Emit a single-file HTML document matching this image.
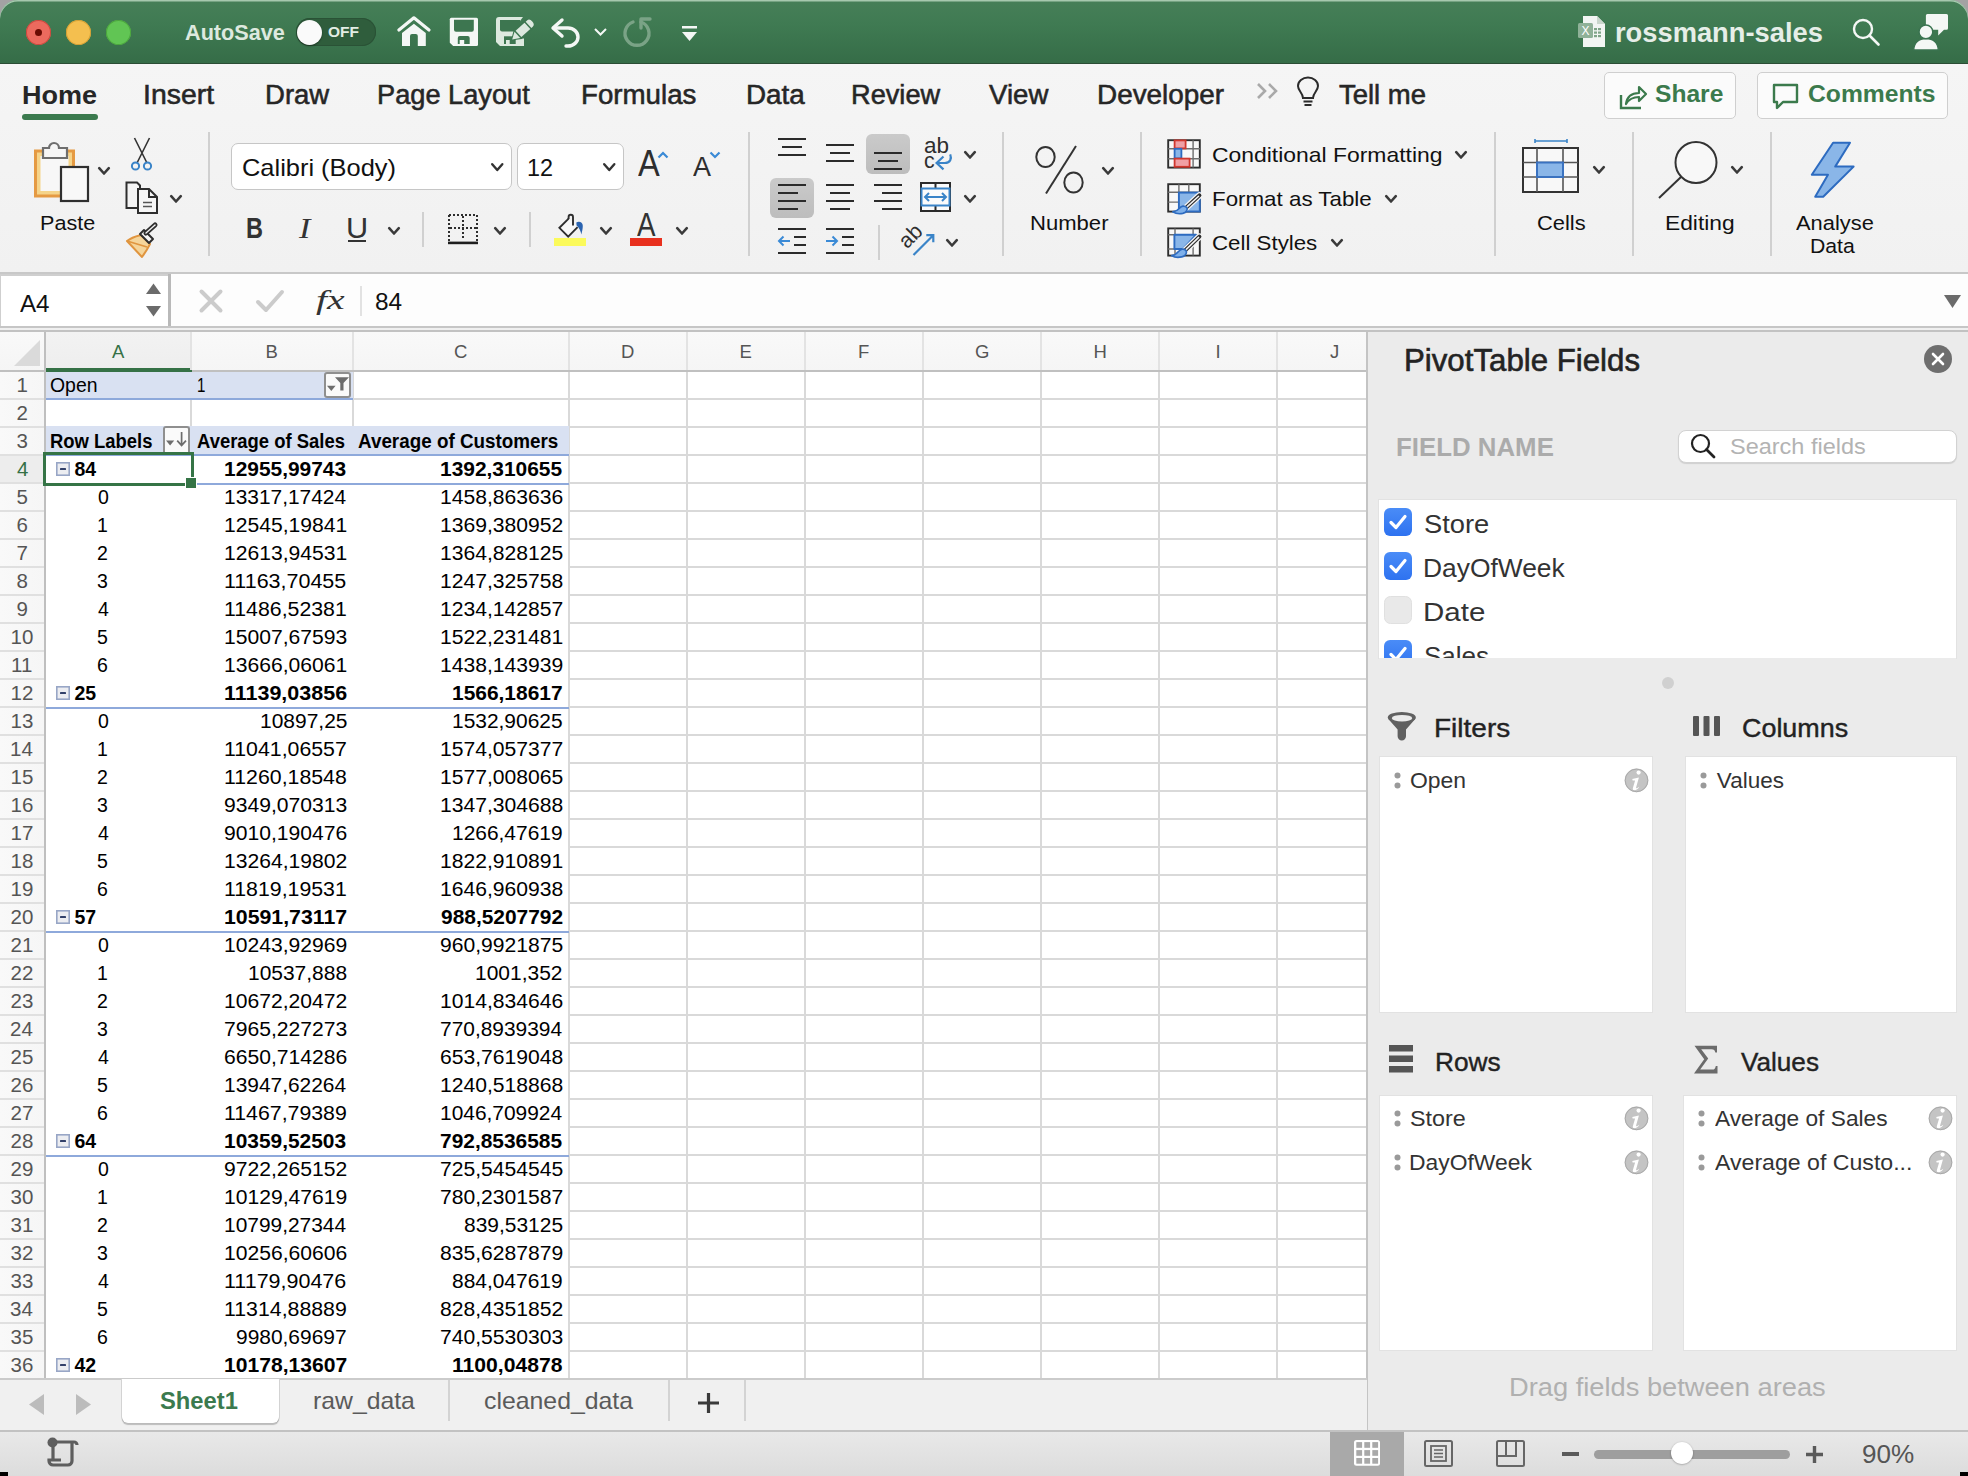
<!DOCTYPE html><html><head><meta charset="utf-8"><style>
html,body{margin:0;padding:0;}
body{width:1968px;height:1476px;overflow:hidden;position:relative;background:#000;font-family:"Liberation Sans",sans-serif;}
.t{position:absolute;white-space:nowrap;transform-origin:0 0;}
.r{position:absolute;}
svg.r{overflow:visible}
</style></head><body>

<div class="r" style="left:0px;top:0px;width:1968px;height:30px;background:#a3a2a3;"></div>
<div class="r" style="left:0px;top:0px;width:1968px;height:1476px;background:#f1f1f1;border-radius:18px 18px 0 0;"></div>
<div class="r" style="left:0px;top:0px;width:1968px;height:64px;background:linear-gradient(#467f58,#3f7a52 40%,#356c47);border-radius:18px 18px 0 0;box-shadow:inset 0 1.5px 0 #a6c8ae;"></div>
<div class="r" style="left:0px;top:62.5px;width:1968px;height:1.5px;background:#2b4d35;"></div>
<div class="r" style="left:25.5px;top:19.5px;width:25px;height:25px;background:#ec6a5e;border-radius:50%;box-shadow:inset 0 0 0 1px #c9483d;"></div>
<div class="r" style="left:65.5px;top:19.5px;width:25px;height:25px;background:#f4bf4f;border-radius:50%;box-shadow:inset 0 0 0 1px #d29f34;"></div>
<div class="r" style="left:105.5px;top:19.5px;width:25px;height:25px;background:#61c554;border-radius:50%;box-shadow:inset 0 0 0 1px #4ba53d;"></div>
<div class="r" style="left:34.5px;top:28.5px;width:7px;height:7px;background:#6b0b03;border-radius:50%;"></div>
<div class="t" style="left:184.60px;top:22px;font-size:22px;line-height:22px;font-weight:700;color:#dde9df;font-family:'Liberation Sans',sans-serif;transform:scaleX(0.9842);">AutoSave</div>
<div class="r" style="left:296px;top:18px;width:80px;height:28px;background:#2f5d3c;border-radius:14px;box-shadow:inset 0 0 0 1px #2a5236;"></div>
<div class="r" style="left:297px;top:19.5px;width:25px;height:25px;background:#fafafa;border-radius:50%;box-shadow:0 1px 2px rgba(0,0,0,.4);"></div>
<div class="t" style="left:328.00px;top:24px;font-size:15.5px;line-height:15.5px;font-weight:700;color:#e3ede5;font-family:'Liberation Sans',sans-serif;">OFF</div>
<svg class="r" style="left:392px;top:10px;" width="90" height="42" viewBox="0 0 90 42"><path d="M6.9 20.1 L21.9 7.8 L37 20.1" fill="none" stroke="#f4f7f5" stroke-width="3.2" stroke-linecap="round" stroke-linejoin="round"/><path d="M10 35.9 V22.9 L21.9 13.7 L33.8 22.9 V35.9 H25.8 V26 a2 2 0 0 0 -2 -2 H20 a2 2 0 0 0 -2 2 V35.9 Z" fill="#f4f7f5"/><path d="M59.3 7.8 H84.5 a1.5 1.5 0 0 1 1.5 1.5 V34.6 a1.5 1.5 0 0 1 -1.5 1.5 H61.2 L57.8 32.7 V9.3 a1.5 1.5 0 0 1 1.5 -1.5 Z" fill="#f4f7f5"/><path d="M62 9.8 H81.8 V19.7 a2 2 0 0 1 -2 2 H64 a2 2 0 0 1 -2 -2 Z" fill="#3d7650"/><path d="M65.8 34 V28 a2 2 0 0 1 2 -2 H75.7 a2 2 0 0 1 2 2 V34 Z" fill="#3d7650"/><rect x="67.7" y="30" width="4.5" height="4" fill="#f4f7f5"/></svg>
<svg class="r" style="left:490px;top:10px;" width="50" height="44" viewBox="0 0 50 44"><path d="M6 10 a3 3 0 0 1 3 -3 H33 L30 11 V21.5 L24 26.3 H27 L30 28.5 H34 V36 H10 L6 32 Z" fill="#dde9df"/><path d="M10 10 H30 V19.5 a2 2 0 0 1 -2 2 H12 a2 2 0 0 1 -2 -2 Z" fill="#3d7650"/><rect x="14" y="26.3" width="11.7" height="7.7" fill="#3d7650"/><rect x="16" y="30" width="3.7" height="4" fill="#dde9df"/><g transform="translate(21.8 29.9) rotate(-42)"><path d="M-1 0 L8 -6 H23 a5 6 0 0 1 0 12 H8 Z" fill="#3d7650"/><path d="M0.5 0 L7.5 -4.3 V4.3 Z" fill="#dde9df"/><rect x="9" y="-4.3" width="12" height="8.6" fill="#dde9df"/><path d="M22.5 -4.3 H24 a3.6 4.3 0 0 1 0 8.6 H22.5 Z" fill="#dde9df"/></g></svg>
<svg class="r" style="left:550px;top:18px;" width="31" height="29" viewBox="0 0 31 29"><path d="M12 2 L3 10 L12 18" fill="none" stroke="#f4f7f5" stroke-width="3.4" stroke-linecap="round" stroke-linejoin="round"/><path d="M4 10 H18 a10 9 0 0 1 0 18 H16" fill="none" stroke="#f4f7f5" stroke-width="3.4" stroke-linecap="round"/></svg>
<svg class="r" style="left:594px;top:28px;" width="13" height="8" viewBox="0 0 13 8"><path d="M1 1 L6.5 6.5 L12 1" fill="none" stroke="#f4f7f5" stroke-width="2"/></svg>
<svg class="r" style="left:623px;top:17px;" width="32" height="32" viewBox="0 0 32 32"><path d="M10 5 a12 12 0 1 0 8 0" fill="none" stroke="#7aa386" stroke-width="3.4" stroke-linecap="round"/><path d="M18 2 V11 M18 2 H27" fill="none" stroke="#7aa386" stroke-width="3.4" stroke-linecap="round"/></svg>
<svg class="r" style="left:682px;top:26px;" width="16" height="16" viewBox="0 0 16 16"><rect x="0" y="0" width="15" height="2.5" fill="#f4f7f5"/><path d="M0 6 H15 L7.5 15 Z" fill="#f4f7f5"/></svg>
<svg class="r" style="left:1578px;top:16px;" width="28" height="31" viewBox="0 0 28 31"><path d="M5 0 H19 L27 8 V31 H5 Z" fill="#f2f5f3"/><path d="M19 0 V8 H27" fill="#c9d6cc"/><rect x="0" y="7" width="15" height="15" rx="1.5" fill="#8fb198"/><text x="3.5" y="19" font-size="12" font-family="Liberation Sans" fill="#fff">X</text><g fill="#7ea487"><rect x="16" y="12" width="3" height="2.2"/><rect x="20" y="12" width="3" height="2.2"/><rect x="16" y="15.5" width="3" height="2.2"/><rect x="20" y="15.5" width="3" height="2.2"/><rect x="16" y="19" width="3" height="2.2"/><rect x="20" y="19" width="3" height="2.2"/></g></svg>
<div class="t" style="left:1615.08px;top:18px;font-size:28.5px;line-height:28.5px;font-weight:700;color:#e6eee8;font-family:'Liberation Sans',sans-serif;transform:scaleX(0.9579);">rossmann-sales</div>
<svg class="r" style="left:1852px;top:18px;" width="29" height="29" viewBox="0 0 29 29"><circle cx="11" cy="11" r="9" fill="none" stroke="#f4f7f5" stroke-width="2.4"/><path d="M17.5 17.5 L26.5 26.5" stroke="#f4f7f5" stroke-width="2.6" stroke-linecap="round"/></svg>
<svg class="r" style="left:1913px;top:13px;" width="37" height="38" viewBox="0 0 37 38"><path d="M12.9 2.4 a1.5 1.5 0 0 1 1.5 -1.5 H33.5 a1.5 1.5 0 0 1 1.5 1.5 V15.3 a1.5 1.5 0 0 1 -1.5 1.5 H31 L25.2 22.6 V16.8 H12.9 Z" fill="#f4f7f5"/><path d="M0.8 37 C0.8 29.5 6 25.6 13 25.6 C20 25.6 25.2 29.5 25.2 37 Z" fill="#f4f7f5" stroke="#3a7350" stroke-width="1.4"/><circle cx="12.9" cy="18.9" r="6.9" fill="#f4f7f5" stroke="#3a7350" stroke-width="1.5"/></svg>
<div class="r" style="left:0px;top:64px;width:1968px;height:209px;background:linear-gradient(#f5f5f5,#f1f1f1);"></div>
<div class="t" style="left:21.96px;top:82px;font-size:26px;line-height:26px;font-weight:700;color:#262626;font-family:'Liberation Sans',sans-serif;transform:scaleX(1.0394);">Home</div>
<div class="t" style="left:142.89px;top:82px;font-size:27px;line-height:27px;font-weight:400;color:#262626;font-family:'Liberation Sans',sans-serif;transform:scaleX(1.0530);-webkit-text-stroke:0.55px #262626;">Insert</div>
<div class="t" style="left:264.76px;top:82px;font-size:27px;line-height:27px;font-weight:400;color:#262626;font-family:'Liberation Sans',sans-serif;transform:scaleX(1.0197);-webkit-text-stroke:0.55px #262626;">Draw</div>
<div class="t" style="left:376.89px;top:82px;font-size:27px;line-height:27px;font-weight:400;color:#262626;font-family:'Liberation Sans',sans-serif;transform:scaleX(1.0073);-webkit-text-stroke:0.55px #262626;">Page Layout</div>
<div class="t" style="left:581.35px;top:82px;font-size:27px;line-height:27px;font-weight:400;color:#262626;font-family:'Liberation Sans',sans-serif;transform:scaleX(1.0255);-webkit-text-stroke:0.55px #262626;">Formulas</div>
<div class="t" style="left:746.24px;top:82px;font-size:27px;line-height:27px;font-weight:400;color:#262626;font-family:'Liberation Sans',sans-serif;transform:scaleX(1.0309);-webkit-text-stroke:0.55px #262626;">Data</div>
<div class="t" style="left:850.69px;top:82px;font-size:27px;line-height:27px;font-weight:400;color:#262626;font-family:'Liberation Sans',sans-serif;transform:scaleX(1.0069);-webkit-text-stroke:0.55px #262626;">Review</div>
<div class="t" style="left:988.70px;top:82px;font-size:27px;line-height:27px;font-weight:400;color:#262626;font-family:'Liberation Sans',sans-serif;transform:scaleX(1.0224);-webkit-text-stroke:0.55px #262626;">View</div>
<div class="t" style="left:1096.73px;top:82px;font-size:27px;line-height:27px;font-weight:400;color:#262626;font-family:'Liberation Sans',sans-serif;transform:scaleX(1.0331);-webkit-text-stroke:0.55px #262626;">Developer</div>
<div class="t" style="left:1338.50px;top:82px;font-size:27px;line-height:27px;font-weight:400;color:#262626;font-family:'Liberation Sans',sans-serif;transform:scaleX(1.0176);-webkit-text-stroke:0.55px #262626;">Tell me</div>
<div class="r" style="left:22px;top:114px;width:76px;height:6px;background:#3b7a4e;border-radius:3px;"></div>
<svg class="r" style="left:1256px;top:82px;" width="25" height="18" viewBox="0 0 25 18"><path d="M2 2 L9 9 L2 16 M13 2 L20 9 L13 16" fill="none" stroke="#a9a9a9" stroke-width="2.6"/></svg>
<svg class="r" style="left:1296px;top:78px;" width="26" height="30" viewBox="0 0 26 30"><path d="M7 20 C7 15 2 13 2 8 a9.5 8 0 0 1 20 0 C22 13 17 15 17 20 Z" fill="none" stroke="#2b2b2b" stroke-width="2"/><path d="M7.5 23.5 H16.5 M8.5 27 H15.5" stroke="#2b2b2b" stroke-width="2"/></svg>
<div class="r" style="left:1603.5px;top:72px;width:132px;height:47px;background:#fbfbfb;border:1px solid #cfcfcf;border-radius:5px;box-sizing:border-box;"></div>
<div class="r" style="left:1756.5px;top:72px;width:191px;height:47px;background:#fbfbfb;border:1px solid #cfcfcf;border-radius:5px;box-sizing:border-box;"></div>
<svg class="r" style="left:1619px;top:83px;" width="28" height="27" viewBox="0 0 28 27"><path d="M2 12 V25 H22" fill="none" stroke="#3b7a4c" stroke-width="2.4"/><path d="M7 21 C8 13 13 10 20 10 V4 L27 11 L20 18 V14 C14 14 10 16 7 21Z" fill="none" stroke="#3b7a4c" stroke-width="2.2" stroke-linejoin="round"/></svg>
<div class="t" style="left:1654.95px;top:83px;font-size:23.5px;line-height:23.5px;font-weight:700;color:#3b7a4c;font-family:'Liberation Sans',sans-serif;transform:scaleX(1.0469);">Share</div>
<svg class="r" style="left:1772px;top:83px;" width="28" height="28" viewBox="0 0 28 28"><path d="M2 2 H25 V19 H11 L5 25 V19 H2 Z" fill="none" stroke="#3b7a4c" stroke-width="2.4" stroke-linejoin="round"/></svg>
<div class="t" style="left:1807.95px;top:83px;font-size:23.5px;line-height:23.5px;font-weight:700;color:#3b7a4c;font-family:'Liberation Sans',sans-serif;transform:scaleX(1.0500);">Comments</div>
<svg class="r" style="left:34px;top:142px;" width="56" height="60" viewBox="0 0 56 60"><rect x="1.5" y="9" width="38" height="45" fill="#f5d48a" stroke="#e59a43" stroke-width="3"/><rect x="6.5" y="14" width="28" height="35" fill="#f7f7f7"/><path d="M9 16 V6 H15 a5 5 0 0 1 10 0 H33 V16 Z" fill="#f6f6f6" stroke="#6e6e6e" stroke-width="2.2"/><rect x="27" y="25" width="27" height="34" fill="#f8f8f8" stroke="#2f2f2f" stroke-width="2.2"/></svg>
<svg class="r" style="left:98px;top:167px;" width="12" height="8" viewBox="0 0 12 8"><path d="M1.2 1.2 L6.0 6.5 L10.8 1.2" fill="none" stroke="#3a3a3a" stroke-width="2.6" stroke-linecap="round" stroke-linejoin="round"/></svg>
<div class="t" style="left:40.25px;top:213px;font-size:20.5px;line-height:20.5px;font-weight:400;color:#111;font-family:'Liberation Sans',sans-serif;transform:scaleX(1.0529);">Paste</div>
<svg class="r" style="left:130px;top:137px;" width="24" height="34" viewBox="0 0 24 34"><path d="M4.5 1 L17 26 M19.5 1 L7 26" stroke="#333" stroke-width="1.6"/><circle cx="5.5" cy="29" r="3.6" fill="none" stroke="#3a84c8" stroke-width="2"/><circle cx="17.5" cy="29" r="3.6" fill="none" stroke="#3a84c8" stroke-width="2"/></svg>
<svg class="r" style="left:125px;top:181px;" width="34" height="34" viewBox="0 0 34 34"><path d="M1.5 1.5 H12 L15 4.5 V27 H1.5 Z" fill="#f4f4f4" stroke="#2e2e2e" stroke-width="2"/><path d="M13 8 H24 L32 16 V32 H13 Z" fill="#f6f6f6" stroke="#2e2e2e" stroke-width="2"/><path d="M24 8 V16 H32" fill="none" stroke="#2e2e2e" stroke-width="2"/><path d="M18 21.5 H27 M18 25.5 H27" stroke="#555" stroke-width="1.6"/></svg>
<svg class="r" style="left:170px;top:195px;" width="12" height="8" viewBox="0 0 12 8"><path d="M1.2 1.2 L6.0 6.5 L10.8 1.2" fill="none" stroke="#3a3a3a" stroke-width="2.6" stroke-linecap="round" stroke-linejoin="round"/></svg>
<svg class="r" style="left:125px;top:223px;" width="35" height="33" viewBox="0 -3 35 33"><path d="M2 15 C7 11 12 10 16 9 L25 18 C23 22 20 27 17 31 Z" fill="#f5d59a" stroke="#e0953f" stroke-width="2" stroke-linejoin="round"/><path d="M2 15 L22 21" stroke="#e0953f" stroke-width="1.6"/><path d="M15 8 L19 4 L28 13 L24 17 Z" fill="#f6f6f6" stroke="#2e2e2e" stroke-width="2" stroke-linejoin="round"/><path d="M21 7 L30 -1" stroke="#2e2e2e" stroke-width="5" stroke-linecap="round"/><path d="M21 7 L30 -1" stroke="#f4f4f4" stroke-width="1.4" stroke-linecap="round"/></svg>
<div class="r" style="left:208px;top:132px;width:2px;height:124px;background:#d0d0d0;"></div>
<div class="r" style="left:230.5px;top:142.5px;width:281px;height:47px;background:#fff;border:1px solid #c6c6c6;border-radius:7px;box-sizing:border-box;"></div>
<div class="t" style="left:241.94px;top:156px;font-size:24px;line-height:24px;font-weight:400;color:#111;font-family:'Liberation Sans',sans-serif;transform:scaleX(1.0594);">Calibri (Body)</div>
<svg class="r" style="left:490.5px;top:163px;" width="12.5" height="8.5" viewBox="0 0 12.5 8.5"><path d="M1.2 1.2 L6.25 7.0 L11.3 1.2" fill="none" stroke="#333" stroke-width="2.4" stroke-linecap="round" stroke-linejoin="round"/></svg>
<div class="r" style="left:516.5px;top:142.5px;width:107px;height:47px;background:#fff;border:1px solid #c6c6c6;border-radius:7px;box-sizing:border-box;"></div>
<div class="t" style="left:526.85px;top:156px;font-size:24px;line-height:24px;font-weight:400;color:#111;font-family:'Liberation Sans',sans-serif;transform:scaleX(0.9750);">12</div>
<svg class="r" style="left:603px;top:163px;" width="12.5" height="8.5" viewBox="0 0 12.5 8.5"><path d="M1.2 1.2 L6.25 7.0 L11.3 1.2" fill="none" stroke="#333" stroke-width="2.4" stroke-linecap="round" stroke-linejoin="round"/></svg>
<div class="t" style="left:638.00px;top:145px;font-size:37px;line-height:37px;font-weight:400;color:#2e2e2e;font-family:'Liberation Sans',sans-serif;transform:scaleX(0.8800);">A</div>
<svg class="r" style="left:657px;top:151px;" width="12" height="8" viewBox="0 0 12 8"><path d="M1.5 6.5 L6 2 L10.5 6.5" fill="none" stroke="#3a8ad6" stroke-width="2.2"/></svg>
<div class="t" style="left:693.00px;top:152px;font-size:28.5px;line-height:28.5px;font-weight:400;color:#2e2e2e;font-family:'Liberation Sans',sans-serif;transform:scaleX(0.9474);">A</div>
<svg class="r" style="left:709px;top:151px;" width="12" height="8" viewBox="0 0 12 8"><path d="M1.5 1.5 L6 6 L10.5 1.5" fill="none" stroke="#3a8ad6" stroke-width="2.2"/></svg>
<div class="t" style="left:245.78px;top:214px;font-size:29px;line-height:29px;font-weight:700;color:#333;font-family:'Liberation Sans',sans-serif;transform:scaleX(0.8111);">B</div>
<div class="t" style="left:299.00px;top:214px;font-size:29px;line-height:29px;font-weight:400;color:#333;font-family:'Liberation Serif',serif;font-style:italic;transform:scaleX(1.1818);">I</div>
<div class="t" style="left:345.88px;top:214px;font-size:29px;line-height:29px;font-weight:400;color:#333;font-family:'Liberation Sans',sans-serif;transform:scaleX(1.0588);">U</div>
<div class="r" style="left:348px;top:240px;width:18px;height:2px;background:#333;"></div>
<svg class="r" style="left:388px;top:227px;" width="12" height="8" viewBox="0 0 12 8"><path d="M1.2 1.2 L6.0 6.5 L10.8 1.2" fill="none" stroke="#3a3a3a" stroke-width="2.6" stroke-linecap="round" stroke-linejoin="round"/></svg>
<div class="r" style="left:422px;top:212px;width:2px;height:35px;background:#d0d0d0;"></div>
<svg class="r" style="left:447px;top:213px;" width="32" height="32" viewBox="0 0 32 32"><g fill="none" stroke="#2e2e2e" stroke-width="2" stroke-dasharray="2 2"><path d="M2 2 H30 V28 M2 2 V28"/><path d="M16 3 V27 M3 15 H29"/></g><rect x="1" y="28.6" width="30" height="2.6" fill="#1e1e1e"/></svg>
<svg class="r" style="left:494px;top:227px;" width="12" height="8" viewBox="0 0 12 8"><path d="M1.2 1.2 L6.0 6.5 L10.8 1.2" fill="none" stroke="#3a3a3a" stroke-width="2.6" stroke-linecap="round" stroke-linejoin="round"/></svg>
<div class="r" style="left:529px;top:212px;width:2px;height:35px;background:#d0d0d0;"></div>
<svg class="r" style="left:557px;top:213px;" width="28" height="26" viewBox="0 0 28 26"><path d="M11.6 5.6 L2.4 14.8 L11.2 23.6 L20.6 14.2" fill="#f8f8f8" stroke="#2e2e2e" stroke-width="1.9" stroke-linejoin="miter"/><path d="M11.6 5.6 L20.6 14.2" stroke="none"/><path d="M16 12.6 V4 a2.2 2.2 0 0 0 -4.4 0 V6" fill="none" stroke="#2e2e2e" stroke-width="1.9"/><path d="M19.3 9.6 C21.5 7.6 25.8 8.8 25.8 12.8 C25.8 15.8 25 18.6 24.4 21.6 C23.6 18 22.6 15.2 19.6 12.6 Z" fill="#2a63b0"/></svg>
<div class="r" style="left:554px;top:237.8px;width:32px;height:8.2px;background:#fbfa5b;"></div>
<svg class="r" style="left:600px;top:227px;" width="12" height="8" viewBox="0 0 12 8"><path d="M1.2 1.2 L6.0 6.5 L10.8 1.2" fill="none" stroke="#3a3a3a" stroke-width="2.6" stroke-linecap="round" stroke-linejoin="round"/></svg>
<div class="t" style="left:637.00px;top:208px;font-size:33px;line-height:33px;font-weight:400;color:#333;font-family:'Liberation Sans',sans-serif;transform:scaleX(0.8409);">A</div>
<div class="r" style="left:630px;top:238px;width:32px;height:8px;background:#e8301e;"></div>
<svg class="r" style="left:676px;top:227px;" width="12" height="8" viewBox="0 0 12 8"><path d="M1.2 1.2 L6.0 6.5 L10.8 1.2" fill="none" stroke="#3a3a3a" stroke-width="2.6" stroke-linecap="round" stroke-linejoin="round"/></svg>
<div class="r" style="left:748px;top:132px;width:2px;height:124px;background:#d0d0d0;"></div>
<div class="r" style="left:866px;top:134px;width:44px;height:40px;background:linear-gradient(#cacaca,#bdbdbd);border-radius:6px;"></div>
<div class="r" style="left:770px;top:178px;width:44px;height:40px;background:linear-gradient(#cacaca,#bdbdbd);border-radius:6px;"></div>
<div class="r" style="left:778px;top:138px;width:28px;height:2px;background:#2b2b2b;"></div>
<div class="r" style="left:782px;top:146px;width:20px;height:2px;background:#2b2b2b;"></div>
<div class="r" style="left:778px;top:154px;width:28px;height:2px;background:#2b2b2b;"></div>
<div class="r" style="left:826px;top:144px;width:28px;height:2px;background:#2b2b2b;"></div>
<div class="r" style="left:830px;top:152px;width:20px;height:2px;background:#2b2b2b;"></div>
<div class="r" style="left:826px;top:160px;width:28px;height:2px;background:#2b2b2b;"></div>
<div class="r" style="left:874px;top:152px;width:28px;height:2px;background:#2b2b2b;"></div>
<div class="r" style="left:878px;top:160px;width:20px;height:2px;background:#2b2b2b;"></div>
<div class="r" style="left:874px;top:168px;width:28px;height:2px;background:#2b2b2b;"></div>
<div class="r" style="left:778px;top:184px;width:28px;height:2px;background:#2b2b2b;"></div>
<div class="r" style="left:778px;top:192px;width:20px;height:2px;background:#2b2b2b;"></div>
<div class="r" style="left:778px;top:200px;width:28px;height:2px;background:#2b2b2b;"></div>
<div class="r" style="left:778px;top:208px;width:20px;height:2px;background:#2b2b2b;"></div>
<div class="r" style="left:826px;top:184px;width:28px;height:2px;background:#2b2b2b;"></div>
<div class="r" style="left:830px;top:192px;width:20px;height:2px;background:#2b2b2b;"></div>
<div class="r" style="left:826px;top:200px;width:28px;height:2px;background:#2b2b2b;"></div>
<div class="r" style="left:830px;top:208px;width:20px;height:2px;background:#2b2b2b;"></div>
<div class="r" style="left:874px;top:184px;width:28px;height:2px;background:#2b2b2b;"></div>
<div class="r" style="left:882px;top:192px;width:20px;height:2px;background:#2b2b2b;"></div>
<div class="r" style="left:874px;top:200px;width:28px;height:2px;background:#2b2b2b;"></div>
<div class="r" style="left:882px;top:208px;width:20px;height:2px;background:#2b2b2b;"></div>
<div class="t" style="left:924.05px;top:136px;font-size:21.5px;line-height:21.5px;font-weight:400;color:#2e2e2e;font-family:'Liberation Sans',sans-serif;transform:scaleX(1.0455);">ab</div>
<div class="t" style="left:924.01px;top:151px;font-size:21.5px;line-height:21.5px;font-weight:400;color:#2e2e2e;font-family:'Liberation Sans',sans-serif;transform:scaleX(0.9889);">c</div>
<svg class="r" style="left:934px;top:152px;" width="20" height="20" viewBox="0 0 20 20"><path d="M16.2 2.4 C17.8 6.5 16.5 11 10.8 11 H3" fill="none" stroke="#3a84c8" stroke-width="2.2"/><path d="M9.5 4.5 L2.6 11 L9.5 17.4" fill="none" stroke="#3a84c8" stroke-width="2.2"/></svg>
<svg class="r" style="left:964px;top:151px;" width="12" height="8" viewBox="0 0 12 8"><path d="M1.2 1.2 L6.0 6.5 L10.8 1.2" fill="none" stroke="#3a3a3a" stroke-width="2.6" stroke-linecap="round" stroke-linejoin="round"/></svg>
<svg class="r" style="left:920px;top:182px;" width="31" height="30" viewBox="0 0 31 30"><rect x="1" y="1" width="29" height="28" fill="#fbfbfb" stroke="#2b2b2b" stroke-width="2"/><path d="M15.5 1 V6 M15.5 24 V29" stroke="#2b2b2b" stroke-width="2"/><rect x="1.5" y="6.5" width="28" height="17" fill="#fbfbfb" stroke="#3a84c8" stroke-width="2"/><path d="M5 15 H26 M9 11 L5 15 L9 19 M22 11 L26 15 L22 19" fill="none" stroke="#3a84c8" stroke-width="2"/></svg>
<svg class="r" style="left:964px;top:195px;" width="12" height="8" viewBox="0 0 12 8"><path d="M1.2 1.2 L6.0 6.5 L10.8 1.2" fill="none" stroke="#3a3a3a" stroke-width="2.6" stroke-linecap="round" stroke-linejoin="round"/></svg>
<div class="r" style="left:778px;top:228px;width:28px;height:2px;background:#2b2b2b;"></div>
<div class="r" style="left:794px;top:236px;width:12px;height:2px;background:#2b2b2b;"></div>
<div class="r" style="left:794px;top:244px;width:12px;height:2px;background:#2b2b2b;"></div>
<div class="r" style="left:778px;top:252px;width:28px;height:2px;background:#2b2b2b;"></div>
<div class="r" style="left:826px;top:228px;width:28px;height:2px;background:#2b2b2b;"></div>
<div class="r" style="left:842px;top:236px;width:12px;height:2px;background:#2b2b2b;"></div>
<div class="r" style="left:842px;top:244px;width:12px;height:2px;background:#2b2b2b;"></div>
<div class="r" style="left:826px;top:252px;width:28px;height:2px;background:#2b2b2b;"></div>
<svg class="r" style="left:777px;top:235px;" width="14" height="12" viewBox="0 0 14 12"><path d="M13 6 H2 M6.5 1.5 L2 6 L6.5 10.5" fill="none" stroke="#3a8ad6" stroke-width="2"/></svg>
<svg class="r" style="left:825px;top:235px;" width="14" height="12" viewBox="0 0 14 12"><path d="M1 6 H12 M7.5 1.5 L12 6 L7.5 10.5" fill="none" stroke="#3a8ad6" stroke-width="2"/></svg>
<div class="r" style="left:878px;top:225px;width:2px;height:35px;background:#d0d0d0;"></div>
<svg class="r" style="left:895px;top:220px;" width="50" height="42" viewBox="0 0 50 42"><text x="0" y="0" font-family="Liberation Sans" font-size="21.5" fill="#2e2e2e" transform="translate(12 29.5) rotate(-45)">ab</text><path d="M18.5 35 L37.5 16 M31.3 15.2 H38.3 V22.2" fill="none" stroke="#3a84c8" stroke-width="2.2"/></svg>
<svg class="r" style="left:946px;top:239px;" width="12" height="8" viewBox="0 0 12 8"><path d="M1.2 1.2 L6.0 6.5 L10.8 1.2" fill="none" stroke="#3a3a3a" stroke-width="2.6" stroke-linecap="round" stroke-linejoin="round"/></svg>
<div class="r" style="left:1002px;top:132px;width:2px;height:124px;background:#d0d0d0;"></div>
<svg class="r" style="left:1033px;top:144px;" width="54" height="52" viewBox="0 0 54 52"><ellipse cx="12.5" cy="13" rx="9.2" ry="10" fill="none" stroke="#333" stroke-width="2"/><ellipse cx="40.5" cy="38.5" rx="9.2" ry="10" fill="none" stroke="#333" stroke-width="2"/><path d="M13 49.5 L43 2" stroke="#333" stroke-width="2"/></svg>
<svg class="r" style="left:1102px;top:167px;" width="12" height="8" viewBox="0 0 12 8"><path d="M1.2 1.2 L6.0 6.5 L10.8 1.2" fill="none" stroke="#3a3a3a" stroke-width="2.6" stroke-linecap="round" stroke-linejoin="round"/></svg>
<div class="t" style="left:1030.42px;top:213px;font-size:20.5px;line-height:20.5px;font-weight:400;color:#111;font-family:'Liberation Sans',sans-serif;transform:scaleX(1.0764);">Number</div>
<div class="r" style="left:1140px;top:132px;width:2px;height:124px;background:#d0d0d0;"></div>
<svg class="r" style="left:1167px;top:139px;" width="34" height="31" viewBox="0 0 34 31"><rect x="1.2" y="1.2" width="31.6" height="27.4" fill="#f8f8f8" stroke="#2e2e2e" stroke-width="1.9"/><path d="M1.2 9.8 H33 M1.2 19.7 H33 M26.1 1.2 V28.6" stroke="#6e6e6e" stroke-width="1.4"/><rect x="7.6" y="1.4" width="11" height="8" fill="#f0a0a5" stroke="#d0372e" stroke-width="1.8"/><rect x="7.6" y="9.8" width="6.8" height="9.6" fill="#8ab6e8" stroke="#2d6bc0" stroke-width="1.8"/><rect x="7.6" y="19.6" width="15" height="8.2" fill="#f0a0a5" stroke="#d0372e" stroke-width="1.8"/></svg>
<div class="t" style="left:1211.91px;top:144px;font-size:21px;line-height:21px;font-weight:400;color:#111;font-family:'Liberation Sans',sans-serif;transform:scaleX(1.0909);">Conditional Formatting</div>
<svg class="r" style="left:1455px;top:151px;" width="12" height="8" viewBox="0 0 12 8"><path d="M1.2 1.2 L6.0 6.5 L10.8 1.2" fill="none" stroke="#3a3a3a" stroke-width="2.6" stroke-linecap="round" stroke-linejoin="round"/></svg>
<svg class="r" style="left:1167px;top:183px;" width="36" height="32" viewBox="0 0 36 32"><rect x="1.2" y="1.2" width="31.6" height="27.4" fill="#f8f8f8" stroke="#2e2e2e" stroke-width="1.9"/><path d="M1.2 9.2 H33 M1.2 19.1 H12 M11.9 1.2 V28.6 M21.8 1.2 V9.2" stroke="#6e6e6e" stroke-width="1.4"/><rect x="11.9" y="9.6" width="20.9" height="18.9" fill="#8ab6e8" stroke="#2d6bc0" stroke-width="1.9"/><path d="M32.4 12.4 L19.2 24.6" stroke="#f4f4f4" stroke-width="6.5" stroke-linecap="round"/><path d="M32.4 12.4 L19.2 24.6" stroke="#2e2e2e" stroke-width="4" stroke-linecap="round"/><path d="M31.6 13.2 L20 23.9" stroke="#f4f4f4" stroke-width="1.5" stroke-linecap="round"/><path d="M5.8 28.8 C9 28.5 10.5 27.5 12.5 25.2 C14.5 22.8 17.5 22.3 19.6 24.4 C21.2 26.2 19.5 29.6 15.8 30.4 C12.5 31 8.5 30.6 5.8 28.8 Z" fill="#7eb0ea" stroke="#2d6bc0" stroke-width="1.6" stroke-linejoin="round"/></svg>
<div class="t" style="left:1211.94px;top:188px;font-size:21px;line-height:21px;font-weight:400;color:#111;font-family:'Liberation Sans',sans-serif;transform:scaleX(1.0638);">Format as Table</div>
<svg class="r" style="left:1385px;top:195px;" width="12" height="8" viewBox="0 0 12 8"><path d="M1.2 1.2 L6.0 6.5 L10.8 1.2" fill="none" stroke="#3a3a3a" stroke-width="2.6" stroke-linecap="round" stroke-linejoin="round"/></svg>
<svg class="r" style="left:1167px;top:227px;" width="36" height="32" viewBox="0 0 36 32"><rect x="1.2" y="1.4" width="31.6" height="27.2" fill="#f8f8f8" stroke="#2e2e2e" stroke-width="1.9"/><path d="M1.2 7.8 H33 M1.2 22 H8 M8 1.4 V28.6 M26.1 1.4 V28.6" stroke="#6e6e6e" stroke-width="1.4"/><path d="M7.4 22 V7.8 H29 L16 22 Z" fill="#8ab6e8" stroke="#2d6bc0" stroke-width="1.9" stroke-linejoin="round"/><path d="M32.4 9.6 L18.2 23.4" stroke="#f4f4f4" stroke-width="6.5" stroke-linecap="round"/><path d="M32.4 9.6 L18.2 23.4" stroke="#2e2e2e" stroke-width="4" stroke-linecap="round"/><path d="M31.6 10.4 L19 22.6" stroke="#f4f4f4" stroke-width="1.5" stroke-linecap="round"/><path d="M4.6 28.6 C7.8 28.3 9.5 27.2 11.5 24.6 C13.5 22 16.6 21.3 18.8 23.4 C20.4 25.4 18.6 29.1 14.8 29.9 C11.5 30.6 7.4 30.4 4.6 28.6 Z" fill="#7eb0ea" stroke="#2d6bc0" stroke-width="1.6" stroke-linejoin="round"/></svg>
<div class="t" style="left:1211.94px;top:232px;font-size:21px;line-height:21px;font-weight:400;color:#111;font-family:'Liberation Sans',sans-serif;transform:scaleX(1.0612);">Cell Styles</div>
<svg class="r" style="left:1331px;top:239px;" width="12" height="8" viewBox="0 0 12 8"><path d="M1.2 1.2 L6.0 6.5 L10.8 1.2" fill="none" stroke="#3a3a3a" stroke-width="2.6" stroke-linecap="round" stroke-linejoin="round"/></svg>
<div class="r" style="left:1494px;top:132px;width:2px;height:124px;background:#d0d0d0;"></div>
<svg class="r" style="left:1522px;top:137px;" width="58" height="56" viewBox="0 0 58 56"><path d="M13 2 V6 M13 4 H45 M45 2 V6" stroke="#3a84c8" stroke-width="1.6"/><rect x="1" y="11" width="55" height="44" fill="#f8f8f8" stroke="#333" stroke-width="2"/><path d="M1 25.5 H56 M1 40 H56 M15 11 V55 M41 11 V55" stroke="#555" stroke-width="1.6"/><rect x="15" y="25.5" width="26" height="14.5" fill="#8ab6e8" stroke="#3a72c0" stroke-width="2"/></svg>
<svg class="r" style="left:1593px;top:166px;" width="12" height="8" viewBox="0 0 12 8"><path d="M1.2 1.2 L6.0 6.5 L10.8 1.2" fill="none" stroke="#3a3a3a" stroke-width="2.6" stroke-linecap="round" stroke-linejoin="round"/></svg>
<div class="t" style="left:1536.93px;top:213px;font-size:20.5px;line-height:20.5px;font-weight:400;color:#111;font-family:'Liberation Sans',sans-serif;transform:scaleX(1.0682);">Cells</div>
<div class="r" style="left:1632px;top:132px;width:2px;height:124px;background:#d0d0d0;"></div>
<svg class="r" style="left:1657px;top:141px;" width="62" height="60" viewBox="0 0 62 60"><circle cx="39" cy="21.5" r="20.5" fill="#f8f8f8" stroke="#333" stroke-width="2"/><path d="M24 36 L2 57" stroke="#333" stroke-width="2"/></svg>
<svg class="r" style="left:1731px;top:166px;" width="12" height="8" viewBox="0 0 12 8"><path d="M1.2 1.2 L6.0 6.5 L10.8 1.2" fill="none" stroke="#3a3a3a" stroke-width="2.6" stroke-linecap="round" stroke-linejoin="round"/></svg>
<div class="t" style="left:1664.59px;top:213px;font-size:20.5px;line-height:20.5px;font-weight:400;color:#111;font-family:'Liberation Sans',sans-serif;transform:scaleX(1.1115);">Editing</div>
<div class="r" style="left:1770px;top:132px;width:2px;height:124px;background:#d0d0d0;"></div>
<svg class="r" style="left:1810px;top:141px;" width="46" height="58" viewBox="0 0 46 58"><path d="M23.1 1.8 H40 L25.2 25.6 H43.6 L13.2 55.8 H5.2 L18 33.8 H1.8 Z" fill="#8ab6e8" stroke="#2d6bc0" stroke-width="2" stroke-linejoin="round"/></svg>
<div class="t" style="left:1795.70px;top:213px;font-size:20.5px;line-height:20.5px;font-weight:400;color:#111;font-family:'Liberation Sans',sans-serif;transform:scaleX(1.0667);">Analyse</div>
<div class="t" style="left:1810.47px;top:236px;font-size:20.5px;line-height:20.5px;font-weight:400;color:#111;font-family:'Liberation Sans',sans-serif;transform:scaleX(1.0349);">Data</div>
<div class="r" style="left:0px;top:272px;width:1968px;height:2px;background:#c8c8c8;"></div>
<div class="r" style="left:0px;top:274px;width:1968px;height:58px;background:#fdfdfd;"></div>
<div class="r" style="left:0px;top:274px;width:170px;height:52px;background:#fff;box-shadow:inset 1px 2px 0 #cfcfcf;"></div>
<div class="r" style="left:168px;top:274px;width:3px;height:52px;background:#b9b9b9;"></div>
<div class="r" style="left:0px;top:326px;width:1968px;height:2px;background:#c6c6c6;"></div>
<div class="r" style="left:0px;top:328px;width:1968px;height:2px;background:#f0f0f0;"></div>
<div class="r" style="left:0px;top:330px;width:1968px;height:2px;background:#c2c2c2;"></div>
<div class="t" style="left:20.30px;top:292px;font-size:24px;line-height:24px;font-weight:400;color:#111;font-family:'Liberation Sans',sans-serif;transform:scaleX(1.0069);">A4</div>
<svg class="r" style="left:146px;top:283px;" width="15" height="11" viewBox="0 0 15 11"><path d="M0 11 L7.5 0.5 L15 11 Z" fill="#6b6b6b"/></svg>
<svg class="r" style="left:146px;top:306px;" width="15" height="11" viewBox="0 0 15 11"><path d="M0 0 L7.5 10.5 L15 0 Z" fill="#6b6b6b"/></svg>
<svg class="r" style="left:199px;top:289px;" width="24" height="24" viewBox="0 0 24 24"><path d="M2.5 2.5 L21.5 21.5 M21.5 2.5 L2.5 21.5" stroke="#cbcbcb" stroke-width="4" stroke-linecap="round"/></svg>
<svg class="r" style="left:255px;top:289px;" width="30" height="24" viewBox="0 0 30 24"><path d="M3 13 L11 21 L27 3" fill="none" stroke="#cbcbcb" stroke-width="4" stroke-linecap="round" stroke-linejoin="round"/></svg>
<div class="t" style="left:316.00px;top:286px;font-size:28px;line-height:28px;font-weight:400;color:#333;font-family:'Liberation Serif',serif;font-style:italic;transform:scaleX(1.4200);">fx</div>
<div class="r" style="left:360px;top:286px;width:1.5px;height:30px;background:#e2e2e2;"></div>
<div class="t" style="left:374.58px;top:290px;font-size:24px;line-height:24px;font-weight:400;color:#111;font-family:'Liberation Sans',sans-serif;transform:scaleX(1.0160);">84</div>
<svg class="r" style="left:1944px;top:295px;" width="17" height="13" viewBox="0 0 17 13"><path d="M0 0 H17 L8.5 13 Z" fill="#6b6b6b"/></svg>
<div class="r" style="left:0px;top:332px;width:1367px;height:39px;background:linear-gradient(#f9f9f9,#f5f5f5);"></div>
<div class="r" style="left:46px;top:332px;width:145px;height:38px;background:linear-gradient(#f2f2f2,#eeeeee);"></div>
<div class="r" style="left:0px;top:370px;width:1367px;height:2px;background:#c0c0c0;"></div>
<div class="r" style="left:46px;top:368px;width:146px;height:4px;background:#357146;"></div>
<svg class="r" style="left:14px;top:340px;" width="26" height="26" viewBox="0 0 26 26"><path d="M26 0 V26 H0 Z" fill="#dadada"/></svg>
<div class="r" style="left:190px;top:332px;width:1.5px;height:38px;background:#e3e3e3;"></div>
<div class="r" style="left:352px;top:332px;width:1.5px;height:38px;background:#e3e3e3;"></div>
<div class="r" style="left:568px;top:332px;width:1.5px;height:38px;background:#e3e3e3;"></div>
<div class="r" style="left:686px;top:332px;width:1.5px;height:38px;background:#e3e3e3;"></div>
<div class="r" style="left:804px;top:332px;width:1.5px;height:38px;background:#e3e3e3;"></div>
<div class="r" style="left:922px;top:332px;width:1.5px;height:38px;background:#e3e3e3;"></div>
<div class="r" style="left:1040px;top:332px;width:1.5px;height:38px;background:#e3e3e3;"></div>
<div class="r" style="left:1158px;top:332px;width:1.5px;height:38px;background:#e3e3e3;"></div>
<div class="r" style="left:1276px;top:332px;width:1.5px;height:38px;background:#e3e3e3;"></div>
<div class="t" style="left:112.00px;top:343px;font-size:18.5px;line-height:18.5px;font-weight:400;color:#357146;font-family:'Liberation Sans',sans-serif;">A</div>
<div class="t" style="left:265.50px;top:343px;font-size:18.5px;line-height:18.5px;font-weight:400;color:#555;font-family:'Liberation Sans',sans-serif;">B</div>
<div class="t" style="left:454.00px;top:343px;font-size:18.5px;line-height:18.5px;font-weight:400;color:#555;font-family:'Liberation Sans',sans-serif;">C</div>
<div class="t" style="left:621.00px;top:343px;font-size:18.5px;line-height:18.5px;font-weight:400;color:#555;font-family:'Liberation Sans',sans-serif;">D</div>
<div class="t" style="left:739.50px;top:343px;font-size:18.5px;line-height:18.5px;font-weight:400;color:#555;font-family:'Liberation Sans',sans-serif;">E</div>
<div class="t" style="left:858.00px;top:343px;font-size:18.5px;line-height:18.5px;font-weight:400;color:#555;font-family:'Liberation Sans',sans-serif;">F</div>
<div class="t" style="left:975.00px;top:343px;font-size:18.5px;line-height:18.5px;font-weight:400;color:#555;font-family:'Liberation Sans',sans-serif;">G</div>
<div class="t" style="left:1093.50px;top:343px;font-size:18.5px;line-height:18.5px;font-weight:400;color:#555;font-family:'Liberation Sans',sans-serif;">H</div>
<div class="t" style="left:1215.50px;top:343px;font-size:18.5px;line-height:18.5px;font-weight:400;color:#555;font-family:'Liberation Sans',sans-serif;">I</div>
<div class="t" style="left:1330.00px;top:343px;font-size:18.5px;line-height:18.5px;font-weight:400;color:#555;font-family:'Liberation Sans',sans-serif;">J</div>
<div class="r" style="left:0px;top:372px;width:1367px;height:1006px;background:#fff;"></div>
<div class="r" style="left:0px;top:372px;width:44px;height:1006px;background:linear-gradient(90deg,#f9f9f9,#f6f6f6);"></div>
<div class="r" style="left:44px;top:332px;width:2px;height:1046px;background:#bfbfbf;"></div>
<div class="r" style="left:0px;top:456px;width:44px;height:26px;background:#ededed;"></div>
<div class="r" style="left:0px;top:398px;width:44px;height:2px;background:#e0e0e0;"></div>
<div class="r" style="left:46px;top:398px;width:1321px;height:2px;background:#d9d9d9;"></div>
<div class="r" style="left:0px;top:426px;width:44px;height:2px;background:#e0e0e0;"></div>
<div class="r" style="left:46px;top:426px;width:1321px;height:2px;background:#d9d9d9;"></div>
<div class="r" style="left:0px;top:454px;width:44px;height:2px;background:#e0e0e0;"></div>
<div class="r" style="left:46px;top:454px;width:1321px;height:2px;background:#d9d9d9;"></div>
<div class="r" style="left:0px;top:482px;width:44px;height:2px;background:#e0e0e0;"></div>
<div class="r" style="left:46px;top:482px;width:1321px;height:2px;background:#d9d9d9;"></div>
<div class="r" style="left:0px;top:510px;width:44px;height:2px;background:#e0e0e0;"></div>
<div class="r" style="left:46px;top:510px;width:1321px;height:2px;background:#d9d9d9;"></div>
<div class="r" style="left:0px;top:538px;width:44px;height:2px;background:#e0e0e0;"></div>
<div class="r" style="left:46px;top:538px;width:1321px;height:2px;background:#d9d9d9;"></div>
<div class="r" style="left:0px;top:566px;width:44px;height:2px;background:#e0e0e0;"></div>
<div class="r" style="left:46px;top:566px;width:1321px;height:2px;background:#d9d9d9;"></div>
<div class="r" style="left:0px;top:594px;width:44px;height:2px;background:#e0e0e0;"></div>
<div class="r" style="left:46px;top:594px;width:1321px;height:2px;background:#d9d9d9;"></div>
<div class="r" style="left:0px;top:622px;width:44px;height:2px;background:#e0e0e0;"></div>
<div class="r" style="left:46px;top:622px;width:1321px;height:2px;background:#d9d9d9;"></div>
<div class="r" style="left:0px;top:650px;width:44px;height:2px;background:#e0e0e0;"></div>
<div class="r" style="left:46px;top:650px;width:1321px;height:2px;background:#d9d9d9;"></div>
<div class="r" style="left:0px;top:678px;width:44px;height:2px;background:#e0e0e0;"></div>
<div class="r" style="left:46px;top:678px;width:1321px;height:2px;background:#d9d9d9;"></div>
<div class="r" style="left:0px;top:706px;width:44px;height:2px;background:#e0e0e0;"></div>
<div class="r" style="left:46px;top:706px;width:1321px;height:2px;background:#d9d9d9;"></div>
<div class="r" style="left:0px;top:734px;width:44px;height:2px;background:#e0e0e0;"></div>
<div class="r" style="left:46px;top:734px;width:1321px;height:2px;background:#d9d9d9;"></div>
<div class="r" style="left:0px;top:762px;width:44px;height:2px;background:#e0e0e0;"></div>
<div class="r" style="left:46px;top:762px;width:1321px;height:2px;background:#d9d9d9;"></div>
<div class="r" style="left:0px;top:790px;width:44px;height:2px;background:#e0e0e0;"></div>
<div class="r" style="left:46px;top:790px;width:1321px;height:2px;background:#d9d9d9;"></div>
<div class="r" style="left:0px;top:818px;width:44px;height:2px;background:#e0e0e0;"></div>
<div class="r" style="left:46px;top:818px;width:1321px;height:2px;background:#d9d9d9;"></div>
<div class="r" style="left:0px;top:846px;width:44px;height:2px;background:#e0e0e0;"></div>
<div class="r" style="left:46px;top:846px;width:1321px;height:2px;background:#d9d9d9;"></div>
<div class="r" style="left:0px;top:874px;width:44px;height:2px;background:#e0e0e0;"></div>
<div class="r" style="left:46px;top:874px;width:1321px;height:2px;background:#d9d9d9;"></div>
<div class="r" style="left:0px;top:902px;width:44px;height:2px;background:#e0e0e0;"></div>
<div class="r" style="left:46px;top:902px;width:1321px;height:2px;background:#d9d9d9;"></div>
<div class="r" style="left:0px;top:930px;width:44px;height:2px;background:#e0e0e0;"></div>
<div class="r" style="left:46px;top:930px;width:1321px;height:2px;background:#d9d9d9;"></div>
<div class="r" style="left:0px;top:958px;width:44px;height:2px;background:#e0e0e0;"></div>
<div class="r" style="left:46px;top:958px;width:1321px;height:2px;background:#d9d9d9;"></div>
<div class="r" style="left:0px;top:986px;width:44px;height:2px;background:#e0e0e0;"></div>
<div class="r" style="left:46px;top:986px;width:1321px;height:2px;background:#d9d9d9;"></div>
<div class="r" style="left:0px;top:1014px;width:44px;height:2px;background:#e0e0e0;"></div>
<div class="r" style="left:46px;top:1014px;width:1321px;height:2px;background:#d9d9d9;"></div>
<div class="r" style="left:0px;top:1042px;width:44px;height:2px;background:#e0e0e0;"></div>
<div class="r" style="left:46px;top:1042px;width:1321px;height:2px;background:#d9d9d9;"></div>
<div class="r" style="left:0px;top:1070px;width:44px;height:2px;background:#e0e0e0;"></div>
<div class="r" style="left:46px;top:1070px;width:1321px;height:2px;background:#d9d9d9;"></div>
<div class="r" style="left:0px;top:1098px;width:44px;height:2px;background:#e0e0e0;"></div>
<div class="r" style="left:46px;top:1098px;width:1321px;height:2px;background:#d9d9d9;"></div>
<div class="r" style="left:0px;top:1126px;width:44px;height:2px;background:#e0e0e0;"></div>
<div class="r" style="left:46px;top:1126px;width:1321px;height:2px;background:#d9d9d9;"></div>
<div class="r" style="left:0px;top:1154px;width:44px;height:2px;background:#e0e0e0;"></div>
<div class="r" style="left:46px;top:1154px;width:1321px;height:2px;background:#d9d9d9;"></div>
<div class="r" style="left:0px;top:1182px;width:44px;height:2px;background:#e0e0e0;"></div>
<div class="r" style="left:46px;top:1182px;width:1321px;height:2px;background:#d9d9d9;"></div>
<div class="r" style="left:0px;top:1210px;width:44px;height:2px;background:#e0e0e0;"></div>
<div class="r" style="left:46px;top:1210px;width:1321px;height:2px;background:#d9d9d9;"></div>
<div class="r" style="left:0px;top:1238px;width:44px;height:2px;background:#e0e0e0;"></div>
<div class="r" style="left:46px;top:1238px;width:1321px;height:2px;background:#d9d9d9;"></div>
<div class="r" style="left:0px;top:1266px;width:44px;height:2px;background:#e0e0e0;"></div>
<div class="r" style="left:46px;top:1266px;width:1321px;height:2px;background:#d9d9d9;"></div>
<div class="r" style="left:0px;top:1294px;width:44px;height:2px;background:#e0e0e0;"></div>
<div class="r" style="left:46px;top:1294px;width:1321px;height:2px;background:#d9d9d9;"></div>
<div class="r" style="left:0px;top:1322px;width:44px;height:2px;background:#e0e0e0;"></div>
<div class="r" style="left:46px;top:1322px;width:1321px;height:2px;background:#d9d9d9;"></div>
<div class="r" style="left:0px;top:1350px;width:44px;height:2px;background:#e0e0e0;"></div>
<div class="r" style="left:46px;top:1350px;width:1321px;height:2px;background:#d9d9d9;"></div>
<div class="r" style="left:0px;top:1378px;width:44px;height:2px;background:#e0e0e0;"></div>
<div class="r" style="left:46px;top:1378px;width:1321px;height:2px;background:#d9d9d9;"></div>
<div class="r" style="left:190px;top:372px;width:2px;height:1006px;background:#d9d9d9;"></div>
<div class="r" style="left:352px;top:372px;width:2px;height:1006px;background:#d9d9d9;"></div>
<div class="r" style="left:568px;top:372px;width:2px;height:1006px;background:#d9d9d9;"></div>
<div class="r" style="left:686px;top:372px;width:2px;height:1006px;background:#d9d9d9;"></div>
<div class="r" style="left:804px;top:372px;width:2px;height:1006px;background:#d9d9d9;"></div>
<div class="r" style="left:922px;top:372px;width:2px;height:1006px;background:#d9d9d9;"></div>
<div class="r" style="left:1040px;top:372px;width:2px;height:1006px;background:#d9d9d9;"></div>
<div class="r" style="left:1158px;top:372px;width:2px;height:1006px;background:#d9d9d9;"></div>
<div class="r" style="left:1276px;top:372px;width:2px;height:1006px;background:#d9d9d9;"></div>
<div class="r" style="left:46px;top:456px;width:522px;height:922px;background:#fff;"></div>
<div class="r" style="left:46px;top:372px;width:307px;height:26px;background:#d9e1f2;"></div>
<div class="r" style="left:46px;top:398px;width:307px;height:2px;background:#8ea9db;"></div>
<div class="r" style="left:46px;top:426px;width:523px;height:28px;background:#d9e1f2;"></div>
<div class="r" style="left:46px;top:454px;width:523px;height:2px;background:#8ea9db;"></div>
<div class="t" style="left:16.50px;top:375px;font-size:20.5px;line-height:20.5px;font-weight:400;color:#555;font-family:'Liberation Sans',sans-serif;">1</div>
<div class="t" style="left:16.50px;top:403px;font-size:20.5px;line-height:20.5px;font-weight:400;color:#555;font-family:'Liberation Sans',sans-serif;">2</div>
<div class="t" style="left:16.50px;top:431px;font-size:20.5px;line-height:20.5px;font-weight:400;color:#555;font-family:'Liberation Sans',sans-serif;">3</div>
<div class="t" style="left:17.00px;top:459px;font-size:20.5px;line-height:20.5px;font-weight:400;color:#357146;font-family:'Liberation Sans',sans-serif;">4</div>
<div class="t" style="left:16.50px;top:487px;font-size:20.5px;line-height:20.5px;font-weight:400;color:#555;font-family:'Liberation Sans',sans-serif;">5</div>
<div class="t" style="left:16.50px;top:515px;font-size:20.5px;line-height:20.5px;font-weight:400;color:#555;font-family:'Liberation Sans',sans-serif;">6</div>
<div class="t" style="left:16.50px;top:543px;font-size:20.5px;line-height:20.5px;font-weight:400;color:#555;font-family:'Liberation Sans',sans-serif;">7</div>
<div class="t" style="left:16.50px;top:571px;font-size:20.5px;line-height:20.5px;font-weight:400;color:#555;font-family:'Liberation Sans',sans-serif;">8</div>
<div class="t" style="left:16.50px;top:599px;font-size:20.5px;line-height:20.5px;font-weight:400;color:#555;font-family:'Liberation Sans',sans-serif;">9</div>
<div class="t" style="left:10.50px;top:627px;font-size:20.5px;line-height:20.5px;font-weight:400;color:#555;font-family:'Liberation Sans',sans-serif;">10</div>
<div class="t" style="left:11.00px;top:655px;font-size:20.5px;line-height:20.5px;font-weight:400;color:#555;font-family:'Liberation Sans',sans-serif;">11</div>
<div class="t" style="left:10.50px;top:683px;font-size:20.5px;line-height:20.5px;font-weight:400;color:#555;font-family:'Liberation Sans',sans-serif;">12</div>
<div class="t" style="left:10.50px;top:711px;font-size:20.5px;line-height:20.5px;font-weight:400;color:#555;font-family:'Liberation Sans',sans-serif;">13</div>
<div class="t" style="left:10.00px;top:739px;font-size:20.5px;line-height:20.5px;font-weight:400;color:#555;font-family:'Liberation Sans',sans-serif;">14</div>
<div class="t" style="left:10.50px;top:767px;font-size:20.5px;line-height:20.5px;font-weight:400;color:#555;font-family:'Liberation Sans',sans-serif;">15</div>
<div class="t" style="left:10.50px;top:795px;font-size:20.5px;line-height:20.5px;font-weight:400;color:#555;font-family:'Liberation Sans',sans-serif;">16</div>
<div class="t" style="left:10.50px;top:823px;font-size:20.5px;line-height:20.5px;font-weight:400;color:#555;font-family:'Liberation Sans',sans-serif;">17</div>
<div class="t" style="left:10.50px;top:851px;font-size:20.5px;line-height:20.5px;font-weight:400;color:#555;font-family:'Liberation Sans',sans-serif;">18</div>
<div class="t" style="left:10.50px;top:879px;font-size:20.5px;line-height:20.5px;font-weight:400;color:#555;font-family:'Liberation Sans',sans-serif;">19</div>
<div class="t" style="left:10.50px;top:907px;font-size:20.5px;line-height:20.5px;font-weight:400;color:#555;font-family:'Liberation Sans',sans-serif;">20</div>
<div class="t" style="left:10.50px;top:935px;font-size:20.5px;line-height:20.5px;font-weight:400;color:#555;font-family:'Liberation Sans',sans-serif;">21</div>
<div class="t" style="left:10.50px;top:963px;font-size:20.5px;line-height:20.5px;font-weight:400;color:#555;font-family:'Liberation Sans',sans-serif;">22</div>
<div class="t" style="left:10.50px;top:991px;font-size:20.5px;line-height:20.5px;font-weight:400;color:#555;font-family:'Liberation Sans',sans-serif;">23</div>
<div class="t" style="left:10.00px;top:1019px;font-size:20.5px;line-height:20.5px;font-weight:400;color:#555;font-family:'Liberation Sans',sans-serif;">24</div>
<div class="t" style="left:10.50px;top:1047px;font-size:20.5px;line-height:20.5px;font-weight:400;color:#555;font-family:'Liberation Sans',sans-serif;">25</div>
<div class="t" style="left:10.50px;top:1075px;font-size:20.5px;line-height:20.5px;font-weight:400;color:#555;font-family:'Liberation Sans',sans-serif;">26</div>
<div class="t" style="left:10.50px;top:1103px;font-size:20.5px;line-height:20.5px;font-weight:400;color:#555;font-family:'Liberation Sans',sans-serif;">27</div>
<div class="t" style="left:10.50px;top:1131px;font-size:20.5px;line-height:20.5px;font-weight:400;color:#555;font-family:'Liberation Sans',sans-serif;">28</div>
<div class="t" style="left:10.50px;top:1159px;font-size:20.5px;line-height:20.5px;font-weight:400;color:#555;font-family:'Liberation Sans',sans-serif;">29</div>
<div class="t" style="left:10.50px;top:1187px;font-size:20.5px;line-height:20.5px;font-weight:400;color:#555;font-family:'Liberation Sans',sans-serif;">30</div>
<div class="t" style="left:10.50px;top:1215px;font-size:20.5px;line-height:20.5px;font-weight:400;color:#555;font-family:'Liberation Sans',sans-serif;">31</div>
<div class="t" style="left:10.50px;top:1243px;font-size:20.5px;line-height:20.5px;font-weight:400;color:#555;font-family:'Liberation Sans',sans-serif;">32</div>
<div class="t" style="left:10.50px;top:1271px;font-size:20.5px;line-height:20.5px;font-weight:400;color:#555;font-family:'Liberation Sans',sans-serif;">33</div>
<div class="t" style="left:10.00px;top:1299px;font-size:20.5px;line-height:20.5px;font-weight:400;color:#555;font-family:'Liberation Sans',sans-serif;">34</div>
<div class="t" style="left:10.50px;top:1327px;font-size:20.5px;line-height:20.5px;font-weight:400;color:#555;font-family:'Liberation Sans',sans-serif;">35</div>
<div class="t" style="left:10.50px;top:1355px;font-size:20.5px;line-height:20.5px;font-weight:400;color:#555;font-family:'Liberation Sans',sans-serif;">36</div>
<div class="t" style="left:49.50px;top:376px;font-size:19.5px;line-height:19.5px;font-weight:400;color:#000;font-family:'Liberation Sans',sans-serif;transform:scaleX(0.9957);">Open</div>
<div class="t" style="left:196.72px;top:376px;font-size:19.5px;line-height:19.5px;font-weight:400;color:#000;font-family:'Liberation Sans',sans-serif;transform:scaleX(0.7778);">1</div>
<div class="r" style="left:324.4px;top:372px;width:27px;height:25.5px;background:#fafafa;border:2px solid #8f8f8f;box-sizing:border-box;border-radius:3px;"></div>
<svg class="r" style="left:324.4px;top:372px;" width="27" height="26" viewBox="0 0 27 26"><path d="M3 13.8 H11.6 L7.3 19 Z" fill="#6d6d6d"/><path d="M11 5.3 H25 L19.5 11 V18.6 H16.3 V11 Z" fill="#6d6d6d"/></svg>
<div class="t" style="left:49.95px;top:432px;font-size:19.5px;line-height:19.5px;font-weight:700;color:#000;font-family:'Liberation Sans',sans-serif;transform:scaleX(0.9458);">Row Labels</div>
<div class="t" style="left:197.00px;top:432px;font-size:19.5px;line-height:19.5px;font-weight:700;color:#000;font-family:'Liberation Sans',sans-serif;transform:scaleX(0.9455);">Average of Sales</div>
<div class="t" style="left:358.00px;top:432px;font-size:19.5px;line-height:19.5px;font-weight:700;color:#000;font-family:'Liberation Sans',sans-serif;transform:scaleX(0.9662);">Average of Customers</div>
<div class="r" style="left:162.5px;top:426.4px;width:27.5px;height:28px;background:#fafafa;border:2px solid #8f8f8f;border-bottom:none;box-sizing:border-box;border-radius:3px 3px 0 0;"></div>
<svg class="r" style="left:162.5px;top:426.4px;" width="28" height="26" viewBox="0 0 28 26"><path d="M3 14.6 H11.2 L7.1 19.4 Z" fill="#6d6d6d"/><path d="M18.6 6 V19 M14.2 14.6 L18.6 19.4 L23 14.6" fill="none" stroke="#6d6d6d" stroke-width="1.7"/></svg>
<svg class="r" style="left:56px;top:461.8px;" width="14" height="14" viewBox="0 0 14 14"><rect x="0.8" y="0.8" width="12.4" height="12.4" fill="#ecedf1" stroke="#98a6c6" stroke-width="1.6"/><rect x="4" y="6" width="6" height="2" rx="0.6" fill="#33416a"/></svg>
<div class="t" style="left:74.40px;top:460px;font-size:19.5px;line-height:19.5px;font-weight:700;color:#000;font-family:'Liberation Sans',sans-serif;">84</div>
<div class="r" style="left:46px;top:482.90000000000003px;width:523px;height:2px;background:#8ea9db;"></div>
<div class="t" style="left:224.43px;top:460px;font-size:19.5px;line-height:19.5px;font-weight:700;color:#000;font-family:'Liberation Sans',sans-serif;transform:scaleX(1.0726);">12955,99743</div>
<div class="t" style="left:440.13px;top:460px;font-size:19.5px;line-height:19.5px;font-weight:700;color:#000;font-family:'Liberation Sans',sans-serif;transform:scaleX(1.0726);">1392,310655</div>
<div class="t" style="left:98.00px;top:488px;font-size:19.5px;line-height:19.5px;font-weight:400;color:#000;font-family:'Liberation Sans',sans-serif;">0</div>
<div class="t" style="left:224.43px;top:488px;font-size:19.5px;line-height:19.5px;font-weight:400;color:#000;font-family:'Liberation Sans',sans-serif;transform:scaleX(1.0726);">13317,17424</div>
<div class="t" style="left:440.12px;top:488px;font-size:19.5px;line-height:19.5px;font-weight:400;color:#000;font-family:'Liberation Sans',sans-serif;transform:scaleX(1.0821);">1458,863636</div>
<div class="t" style="left:97.00px;top:516px;font-size:19.5px;line-height:19.5px;font-weight:400;color:#000;font-family:'Liberation Sans',sans-serif;">1</div>
<div class="t" style="left:224.42px;top:516px;font-size:19.5px;line-height:19.5px;font-weight:400;color:#000;font-family:'Liberation Sans',sans-serif;transform:scaleX(1.0821);">12545,19841</div>
<div class="t" style="left:440.12px;top:516px;font-size:19.5px;line-height:19.5px;font-weight:400;color:#000;font-family:'Liberation Sans',sans-serif;transform:scaleX(1.0821);">1369,380952</div>
<div class="t" style="left:97.00px;top:544px;font-size:19.5px;line-height:19.5px;font-weight:400;color:#000;font-family:'Liberation Sans',sans-serif;">2</div>
<div class="t" style="left:224.42px;top:544px;font-size:19.5px;line-height:19.5px;font-weight:400;color:#000;font-family:'Liberation Sans',sans-serif;transform:scaleX(1.0821);">12613,94531</div>
<div class="t" style="left:440.12px;top:544px;font-size:19.5px;line-height:19.5px;font-weight:400;color:#000;font-family:'Liberation Sans',sans-serif;transform:scaleX(1.0821);">1364,828125</div>
<div class="t" style="left:97.00px;top:572px;font-size:19.5px;line-height:19.5px;font-weight:400;color:#000;font-family:'Liberation Sans',sans-serif;">3</div>
<div class="t" style="left:224.40px;top:572px;font-size:19.5px;line-height:19.5px;font-weight:400;color:#000;font-family:'Liberation Sans',sans-serif;transform:scaleX(1.1018);">11163,70455</div>
<div class="t" style="left:440.12px;top:572px;font-size:19.5px;line-height:19.5px;font-weight:400;color:#000;font-family:'Liberation Sans',sans-serif;transform:scaleX(1.0821);">1247,325758</div>
<div class="t" style="left:98.00px;top:600px;font-size:19.5px;line-height:19.5px;font-weight:400;color:#000;font-family:'Liberation Sans',sans-serif;">4</div>
<div class="t" style="left:224.41px;top:600px;font-size:19.5px;line-height:19.5px;font-weight:400;color:#000;font-family:'Liberation Sans',sans-serif;transform:scaleX(1.0919);">11486,52381</div>
<div class="t" style="left:440.12px;top:600px;font-size:19.5px;line-height:19.5px;font-weight:400;color:#000;font-family:'Liberation Sans',sans-serif;transform:scaleX(1.0821);">1234,142857</div>
<div class="t" style="left:97.00px;top:628px;font-size:19.5px;line-height:19.5px;font-weight:400;color:#000;font-family:'Liberation Sans',sans-serif;">5</div>
<div class="t" style="left:224.42px;top:628px;font-size:19.5px;line-height:19.5px;font-weight:400;color:#000;font-family:'Liberation Sans',sans-serif;transform:scaleX(1.0821);">15007,67593</div>
<div class="t" style="left:440.12px;top:628px;font-size:19.5px;line-height:19.5px;font-weight:400;color:#000;font-family:'Liberation Sans',sans-serif;transform:scaleX(1.0821);">1522,231481</div>
<div class="t" style="left:97.00px;top:656px;font-size:19.5px;line-height:19.5px;font-weight:400;color:#000;font-family:'Liberation Sans',sans-serif;">6</div>
<div class="t" style="left:224.42px;top:656px;font-size:19.5px;line-height:19.5px;font-weight:400;color:#000;font-family:'Liberation Sans',sans-serif;transform:scaleX(1.0821);">13666,06061</div>
<div class="t" style="left:440.12px;top:656px;font-size:19.5px;line-height:19.5px;font-weight:400;color:#000;font-family:'Liberation Sans',sans-serif;transform:scaleX(1.0821);">1438,143939</div>
<svg class="r" style="left:56px;top:685.8px;" width="14" height="14" viewBox="0 0 14 14"><rect x="0.8" y="0.8" width="12.4" height="12.4" fill="#ecedf1" stroke="#98a6c6" stroke-width="1.6"/><rect x="4" y="6" width="6" height="2" rx="0.6" fill="#33416a"/></svg>
<div class="t" style="left:74.40px;top:684px;font-size:19.5px;line-height:19.5px;font-weight:700;color:#000;font-family:'Liberation Sans',sans-serif;">25</div>
<div class="r" style="left:46px;top:706.9px;width:523px;height:2px;background:#8ea9db;"></div>
<div class="t" style="left:224.40px;top:684px;font-size:19.5px;line-height:19.5px;font-weight:700;color:#000;font-family:'Liberation Sans',sans-serif;transform:scaleX(1.1018);">11139,03856</div>
<div class="t" style="left:451.85px;top:684px;font-size:19.5px;line-height:19.5px;font-weight:700;color:#000;font-family:'Liberation Sans',sans-serif;transform:scaleX(1.0733);">1566,18617</div>
<div class="t" style="left:98.00px;top:712px;font-size:19.5px;line-height:19.5px;font-weight:400;color:#000;font-family:'Liberation Sans',sans-serif;">0</div>
<div class="t" style="left:259.58px;top:712px;font-size:19.5px;line-height:19.5px;font-weight:400;color:#000;font-family:'Liberation Sans',sans-serif;transform:scaleX(1.0755);">10897,25</div>
<div class="t" style="left:451.85px;top:712px;font-size:19.5px;line-height:19.5px;font-weight:400;color:#000;font-family:'Liberation Sans',sans-serif;transform:scaleX(1.0733);">1532,90625</div>
<div class="t" style="left:97.00px;top:740px;font-size:19.5px;line-height:19.5px;font-weight:400;color:#000;font-family:'Liberation Sans',sans-serif;">1</div>
<div class="t" style="left:224.41px;top:740px;font-size:19.5px;line-height:19.5px;font-weight:400;color:#000;font-family:'Liberation Sans',sans-serif;transform:scaleX(1.0919);">11041,06557</div>
<div class="t" style="left:440.12px;top:740px;font-size:19.5px;line-height:19.5px;font-weight:400;color:#000;font-family:'Liberation Sans',sans-serif;transform:scaleX(1.0821);">1574,057377</div>
<div class="t" style="left:97.00px;top:768px;font-size:19.5px;line-height:19.5px;font-weight:400;color:#000;font-family:'Liberation Sans',sans-serif;">2</div>
<div class="t" style="left:224.41px;top:768px;font-size:19.5px;line-height:19.5px;font-weight:400;color:#000;font-family:'Liberation Sans',sans-serif;transform:scaleX(1.0919);">11260,18548</div>
<div class="t" style="left:440.12px;top:768px;font-size:19.5px;line-height:19.5px;font-weight:400;color:#000;font-family:'Liberation Sans',sans-serif;transform:scaleX(1.0821);">1577,008065</div>
<div class="t" style="left:97.00px;top:796px;font-size:19.5px;line-height:19.5px;font-weight:400;color:#000;font-family:'Liberation Sans',sans-serif;">3</div>
<div class="t" style="left:224.42px;top:796px;font-size:19.5px;line-height:19.5px;font-weight:400;color:#000;font-family:'Liberation Sans',sans-serif;transform:scaleX(1.0821);">9349,070313</div>
<div class="t" style="left:440.12px;top:796px;font-size:19.5px;line-height:19.5px;font-weight:400;color:#000;font-family:'Liberation Sans',sans-serif;transform:scaleX(1.0821);">1347,304688</div>
<div class="t" style="left:98.00px;top:824px;font-size:19.5px;line-height:19.5px;font-weight:400;color:#000;font-family:'Liberation Sans',sans-serif;">4</div>
<div class="t" style="left:224.42px;top:824px;font-size:19.5px;line-height:19.5px;font-weight:400;color:#000;font-family:'Liberation Sans',sans-serif;transform:scaleX(1.0821);">9010,190476</div>
<div class="t" style="left:451.85px;top:824px;font-size:19.5px;line-height:19.5px;font-weight:400;color:#000;font-family:'Liberation Sans',sans-serif;transform:scaleX(1.0733);">1266,47619</div>
<div class="t" style="left:97.00px;top:852px;font-size:19.5px;line-height:19.5px;font-weight:400;color:#000;font-family:'Liberation Sans',sans-serif;">5</div>
<div class="t" style="left:224.42px;top:852px;font-size:19.5px;line-height:19.5px;font-weight:400;color:#000;font-family:'Liberation Sans',sans-serif;transform:scaleX(1.0821);">13264,19802</div>
<div class="t" style="left:440.12px;top:852px;font-size:19.5px;line-height:19.5px;font-weight:400;color:#000;font-family:'Liberation Sans',sans-serif;transform:scaleX(1.0821);">1822,910891</div>
<div class="t" style="left:97.00px;top:880px;font-size:19.5px;line-height:19.5px;font-weight:400;color:#000;font-family:'Liberation Sans',sans-serif;">6</div>
<div class="t" style="left:224.41px;top:880px;font-size:19.5px;line-height:19.5px;font-weight:400;color:#000;font-family:'Liberation Sans',sans-serif;transform:scaleX(1.0919);">11819,19531</div>
<div class="t" style="left:440.12px;top:880px;font-size:19.5px;line-height:19.5px;font-weight:400;color:#000;font-family:'Liberation Sans',sans-serif;transform:scaleX(1.0821);">1646,960938</div>
<svg class="r" style="left:56px;top:909.8px;" width="14" height="14" viewBox="0 0 14 14"><rect x="0.8" y="0.8" width="12.4" height="12.4" fill="#ecedf1" stroke="#98a6c6" stroke-width="1.6"/><rect x="4" y="6" width="6" height="2" rx="0.6" fill="#33416a"/></svg>
<div class="t" style="left:74.40px;top:908px;font-size:19.5px;line-height:19.5px;font-weight:700;color:#000;font-family:'Liberation Sans',sans-serif;">57</div>
<div class="r" style="left:46px;top:930.9px;width:523px;height:2px;background:#8ea9db;"></div>
<div class="t" style="left:224.41px;top:908px;font-size:19.5px;line-height:19.5px;font-weight:700;color:#000;font-family:'Liberation Sans',sans-serif;transform:scaleX(1.0919);">10591,73117</div>
<div class="t" style="left:441.20px;top:908px;font-size:19.5px;line-height:19.5px;font-weight:700;color:#000;font-family:'Liberation Sans',sans-serif;transform:scaleX(1.0726);">988,5207792</div>
<div class="t" style="left:98.00px;top:936px;font-size:19.5px;line-height:19.5px;font-weight:400;color:#000;font-family:'Liberation Sans',sans-serif;">0</div>
<div class="t" style="left:224.42px;top:936px;font-size:19.5px;line-height:19.5px;font-weight:400;color:#000;font-family:'Liberation Sans',sans-serif;transform:scaleX(1.0821);">10243,92969</div>
<div class="t" style="left:440.12px;top:936px;font-size:19.5px;line-height:19.5px;font-weight:400;color:#000;font-family:'Liberation Sans',sans-serif;transform:scaleX(1.0821);">960,9921875</div>
<div class="t" style="left:97.00px;top:964px;font-size:19.5px;line-height:19.5px;font-weight:400;color:#000;font-family:'Liberation Sans',sans-serif;">1</div>
<div class="t" style="left:247.87px;top:964px;font-size:19.5px;line-height:19.5px;font-weight:400;color:#000;font-family:'Liberation Sans',sans-serif;transform:scaleX(1.0743);">10537,888</div>
<div class="t" style="left:475.28px;top:964px;font-size:19.5px;line-height:19.5px;font-weight:400;color:#000;font-family:'Liberation Sans',sans-serif;transform:scaleX(1.0755);">1001,352</div>
<div class="t" style="left:97.00px;top:992px;font-size:19.5px;line-height:19.5px;font-weight:400;color:#000;font-family:'Liberation Sans',sans-serif;">2</div>
<div class="t" style="left:224.42px;top:992px;font-size:19.5px;line-height:19.5px;font-weight:400;color:#000;font-family:'Liberation Sans',sans-serif;transform:scaleX(1.0821);">10672,20472</div>
<div class="t" style="left:440.12px;top:992px;font-size:19.5px;line-height:19.5px;font-weight:400;color:#000;font-family:'Liberation Sans',sans-serif;transform:scaleX(1.0821);">1014,834646</div>
<div class="t" style="left:97.00px;top:1020px;font-size:19.5px;line-height:19.5px;font-weight:400;color:#000;font-family:'Liberation Sans',sans-serif;">3</div>
<div class="t" style="left:224.42px;top:1020px;font-size:19.5px;line-height:19.5px;font-weight:400;color:#000;font-family:'Liberation Sans',sans-serif;transform:scaleX(1.0821);">7965,227273</div>
<div class="t" style="left:440.13px;top:1020px;font-size:19.5px;line-height:19.5px;font-weight:400;color:#000;font-family:'Liberation Sans',sans-serif;transform:scaleX(1.0726);">770,8939394</div>
<div class="t" style="left:98.00px;top:1048px;font-size:19.5px;line-height:19.5px;font-weight:400;color:#000;font-family:'Liberation Sans',sans-serif;">4</div>
<div class="t" style="left:224.42px;top:1048px;font-size:19.5px;line-height:19.5px;font-weight:400;color:#000;font-family:'Liberation Sans',sans-serif;transform:scaleX(1.0821);">6650,714286</div>
<div class="t" style="left:440.12px;top:1048px;font-size:19.5px;line-height:19.5px;font-weight:400;color:#000;font-family:'Liberation Sans',sans-serif;transform:scaleX(1.0821);">653,7619048</div>
<div class="t" style="left:97.00px;top:1076px;font-size:19.5px;line-height:19.5px;font-weight:400;color:#000;font-family:'Liberation Sans',sans-serif;">5</div>
<div class="t" style="left:224.43px;top:1076px;font-size:19.5px;line-height:19.5px;font-weight:400;color:#000;font-family:'Liberation Sans',sans-serif;transform:scaleX(1.0726);">13947,62264</div>
<div class="t" style="left:440.12px;top:1076px;font-size:19.5px;line-height:19.5px;font-weight:400;color:#000;font-family:'Liberation Sans',sans-serif;transform:scaleX(1.0821);">1240,518868</div>
<div class="t" style="left:97.00px;top:1104px;font-size:19.5px;line-height:19.5px;font-weight:400;color:#000;font-family:'Liberation Sans',sans-serif;">6</div>
<div class="t" style="left:224.41px;top:1104px;font-size:19.5px;line-height:19.5px;font-weight:400;color:#000;font-family:'Liberation Sans',sans-serif;transform:scaleX(1.0919);">11467,79389</div>
<div class="t" style="left:440.13px;top:1104px;font-size:19.5px;line-height:19.5px;font-weight:400;color:#000;font-family:'Liberation Sans',sans-serif;transform:scaleX(1.0726);">1046,709924</div>
<svg class="r" style="left:56px;top:1133.8px;" width="14" height="14" viewBox="0 0 14 14"><rect x="0.8" y="0.8" width="12.4" height="12.4" fill="#ecedf1" stroke="#98a6c6" stroke-width="1.6"/><rect x="4" y="6" width="6" height="2" rx="0.6" fill="#33416a"/></svg>
<div class="t" style="left:74.40px;top:1132px;font-size:19.5px;line-height:19.5px;font-weight:700;color:#000;font-family:'Liberation Sans',sans-serif;">64</div>
<div class="r" style="left:46px;top:1154.8999999999999px;width:523px;height:2px;background:#8ea9db;"></div>
<div class="t" style="left:224.43px;top:1132px;font-size:19.5px;line-height:19.5px;font-weight:700;color:#000;font-family:'Liberation Sans',sans-serif;transform:scaleX(1.0726);">10359,52503</div>
<div class="t" style="left:440.13px;top:1132px;font-size:19.5px;line-height:19.5px;font-weight:700;color:#000;font-family:'Liberation Sans',sans-serif;transform:scaleX(1.0726);">792,8536585</div>
<div class="t" style="left:98.00px;top:1160px;font-size:19.5px;line-height:19.5px;font-weight:400;color:#000;font-family:'Liberation Sans',sans-serif;">0</div>
<div class="t" style="left:224.42px;top:1160px;font-size:19.5px;line-height:19.5px;font-weight:400;color:#000;font-family:'Liberation Sans',sans-serif;transform:scaleX(1.0821);">9722,265152</div>
<div class="t" style="left:440.12px;top:1160px;font-size:19.5px;line-height:19.5px;font-weight:400;color:#000;font-family:'Liberation Sans',sans-serif;transform:scaleX(1.0821);">725,5454545</div>
<div class="t" style="left:97.00px;top:1188px;font-size:19.5px;line-height:19.5px;font-weight:400;color:#000;font-family:'Liberation Sans',sans-serif;">1</div>
<div class="t" style="left:224.42px;top:1188px;font-size:19.5px;line-height:19.5px;font-weight:400;color:#000;font-family:'Liberation Sans',sans-serif;transform:scaleX(1.0821);">10129,47619</div>
<div class="t" style="left:440.12px;top:1188px;font-size:19.5px;line-height:19.5px;font-weight:400;color:#000;font-family:'Liberation Sans',sans-serif;transform:scaleX(1.0821);">780,2301587</div>
<div class="t" style="left:97.00px;top:1216px;font-size:19.5px;line-height:19.5px;font-weight:400;color:#000;font-family:'Liberation Sans',sans-serif;">2</div>
<div class="t" style="left:224.43px;top:1216px;font-size:19.5px;line-height:19.5px;font-weight:400;color:#000;font-family:'Liberation Sans',sans-serif;transform:scaleX(1.0726);">10799,27344</div>
<div class="t" style="left:463.57px;top:1216px;font-size:19.5px;line-height:19.5px;font-weight:400;color:#000;font-family:'Liberation Sans',sans-serif;transform:scaleX(1.0743);">839,53125</div>
<div class="t" style="left:97.00px;top:1244px;font-size:19.5px;line-height:19.5px;font-weight:400;color:#000;font-family:'Liberation Sans',sans-serif;">3</div>
<div class="t" style="left:224.42px;top:1244px;font-size:19.5px;line-height:19.5px;font-weight:400;color:#000;font-family:'Liberation Sans',sans-serif;transform:scaleX(1.0821);">10256,60606</div>
<div class="t" style="left:440.12px;top:1244px;font-size:19.5px;line-height:19.5px;font-weight:400;color:#000;font-family:'Liberation Sans',sans-serif;transform:scaleX(1.0821);">835,6287879</div>
<div class="t" style="left:98.00px;top:1272px;font-size:19.5px;line-height:19.5px;font-weight:400;color:#000;font-family:'Liberation Sans',sans-serif;">4</div>
<div class="t" style="left:224.40px;top:1272px;font-size:19.5px;line-height:19.5px;font-weight:400;color:#000;font-family:'Liberation Sans',sans-serif;transform:scaleX(1.1018);">11179,90476</div>
<div class="t" style="left:451.85px;top:1272px;font-size:19.5px;line-height:19.5px;font-weight:400;color:#000;font-family:'Liberation Sans',sans-serif;transform:scaleX(1.0733);">884,047619</div>
<div class="t" style="left:97.00px;top:1300px;font-size:19.5px;line-height:19.5px;font-weight:400;color:#000;font-family:'Liberation Sans',sans-serif;">5</div>
<div class="t" style="left:224.41px;top:1300px;font-size:19.5px;line-height:19.5px;font-weight:400;color:#000;font-family:'Liberation Sans',sans-serif;transform:scaleX(1.0919);">11314,88889</div>
<div class="t" style="left:440.12px;top:1300px;font-size:19.5px;line-height:19.5px;font-weight:400;color:#000;font-family:'Liberation Sans',sans-serif;transform:scaleX(1.0821);">828,4351852</div>
<div class="t" style="left:97.00px;top:1328px;font-size:19.5px;line-height:19.5px;font-weight:400;color:#000;font-family:'Liberation Sans',sans-serif;">6</div>
<div class="t" style="left:236.15px;top:1328px;font-size:19.5px;line-height:19.5px;font-weight:400;color:#000;font-family:'Liberation Sans',sans-serif;transform:scaleX(1.0733);">9980,69697</div>
<div class="t" style="left:440.12px;top:1328px;font-size:19.5px;line-height:19.5px;font-weight:400;color:#000;font-family:'Liberation Sans',sans-serif;transform:scaleX(1.0821);">740,5530303</div>
<svg class="r" style="left:56px;top:1357.8px;" width="14" height="14" viewBox="0 0 14 14"><rect x="0.8" y="0.8" width="12.4" height="12.4" fill="#ecedf1" stroke="#98a6c6" stroke-width="1.6"/><rect x="4" y="6" width="6" height="2" rx="0.6" fill="#33416a"/></svg>
<div class="t" style="left:74.40px;top:1356px;font-size:19.5px;line-height:19.5px;font-weight:700;color:#000;font-family:'Liberation Sans',sans-serif;">42</div>
<div class="r" style="left:46px;top:1378.8999999999999px;width:523px;height:2px;background:#8ea9db;"></div>
<div class="t" style="left:224.42px;top:1356px;font-size:19.5px;line-height:19.5px;font-weight:700;color:#000;font-family:'Liberation Sans',sans-serif;transform:scaleX(1.0821);">10178,13607</div>
<div class="t" style="left:451.84px;top:1356px;font-size:19.5px;line-height:19.5px;font-weight:700;color:#000;font-family:'Liberation Sans',sans-serif;transform:scaleX(1.0840);">1100,04878</div>
<div class="r" style="left:42.5px;top:452px;width:151px;height:33.5px;border:3.5px solid #357446;box-sizing:border-box;"></div>
<div class="r" style="left:186px;top:478px;width:10px;height:10px;background:#357446;box-shadow:0 0 0 1px #fff;"></div>
<div class="r" style="left:1367px;top:332px;width:601px;height:1098px;background:#ebebeb;"></div>
<div class="r" style="left:1366px;top:332px;width:2px;height:1098px;background:#c4c4c4;"></div>
<div class="t" style="left:1403.72px;top:345px;font-size:31.5px;line-height:31.5px;font-weight:400;color:#232323;font-family:'Liberation Sans',sans-serif;transform:scaleX(0.9911);-webkit-text-stroke:0.6px #232323;">PivotTable Fields</div>
<svg class="r" style="left:1923.5px;top:345px;" width="28" height="28" viewBox="0 0 28 28"><circle cx="14" cy="14" r="14" fill="#6e6e6e"/><path d="M9 9 L19 19 M19 9 L9 19" stroke="#fff" stroke-width="2.6" stroke-linecap="round"/></svg>
<div class="t" style="left:1396.01px;top:434px;font-size:26px;line-height:26px;font-weight:700;color:#ababab;font-family:'Liberation Sans',sans-serif;transform:scaleX(0.9936);">FIELD NAME</div>
<div class="r" style="left:1677.5px;top:430px;width:279px;height:33px;background:#fff;border:1px solid #d2d2d2;border-radius:8px;box-sizing:border-box;box-shadow:0 1px 1px rgba(0,0,0,.12);"></div>
<svg class="r" style="left:1690px;top:433px;" width="27" height="26" viewBox="0 0 27 26"><circle cx="10.5" cy="10.5" r="8.5" fill="none" stroke="#222" stroke-width="2.2"/><path d="M16.5 16.5 L24 24" stroke="#222" stroke-width="2.8" stroke-linecap="round"/></svg>
<div class="t" style="left:1729.61px;top:437px;font-size:21.5px;line-height:21.5px;font-weight:400;color:#b3b3b3;font-family:'Liberation Sans',sans-serif;transform:scaleX(1.0919);">Search fields</div>
<div class="r" style="left:1379px;top:499.5px;width:577px;height:158.5px;background:#fff;box-shadow:0 0 0 1px #e2e2e2;overflow:hidden;"></div>
<div class="r" style="left:1379px;top:499.5px;width:577px;height:158.5px;overflow:hidden;">
<svg class="r" style="left:5px;top:8.5px;" width="28" height="28" viewBox="0 0 28 28"><defs><linearGradient id="cb" x1="0" y1="0" x2="0" y2="1"><stop offset="0" stop-color="#4a8cf7"/><stop offset="1" stop-color="#2e72f0"/></linearGradient></defs><rect x="0" y="0" width="28" height="28" rx="6" fill="url(#cb)"/><path d="M7 14.5 L12 19.5 L21 8.5" fill="none" stroke="#fff" stroke-width="3.2" stroke-linecap="round" stroke-linejoin="round"/></svg>
<svg class="r" style="left:5px;top:52.5px;" width="28" height="28" viewBox="0 0 28 28"><defs><linearGradient id="cb" x1="0" y1="0" x2="0" y2="1"><stop offset="0" stop-color="#4a8cf7"/><stop offset="1" stop-color="#2e72f0"/></linearGradient></defs><rect x="0" y="0" width="28" height="28" rx="6" fill="url(#cb)"/><path d="M7 14.5 L12 19.5 L21 8.5" fill="none" stroke="#fff" stroke-width="3.2" stroke-linecap="round" stroke-linejoin="round"/></svg>
<svg class="r" style="left:5px;top:96.5px;" width="28" height="28" viewBox="0 0 28 28"><rect x="0.5" y="0.5" width="27" height="27" rx="6" fill="#e9e9e9" stroke="#e0e0e0"/></svg>
<svg class="r" style="left:5px;top:140.5px;" width="28" height="28" viewBox="0 0 28 28"><defs><linearGradient id="cb" x1="0" y1="0" x2="0" y2="1"><stop offset="0" stop-color="#4a8cf7"/><stop offset="1" stop-color="#2e72f0"/></linearGradient></defs><rect x="0" y="0" width="28" height="28" rx="6" fill="url(#cb)"/><path d="M7 14.5 L12 19.5 L21 8.5" fill="none" stroke="#fff" stroke-width="3.2" stroke-linecap="round" stroke-linejoin="round"/></svg>
</div>
<div class="t" style="left:1423.95px;top:511px;font-size:26px;line-height:26px;font-weight:400;color:#333;font-family:'Liberation Sans',sans-serif;transform:scaleX(1.0500);">Store</div>
<div class="t" style="left:1422.97px;top:555px;font-size:26px;line-height:26px;font-weight:400;color:#333;font-family:'Liberation Sans',sans-serif;transform:scaleX(1.0145);">DayOfWeek</div>
<div class="t" style="left:1422.73px;top:599px;font-size:26px;line-height:26px;font-weight:400;color:#333;font-family:'Liberation Sans',sans-serif;transform:scaleX(1.1346);">Date</div>
<div class="t" style="left:1424.00px;top:643px;font-size:26px;line-height:26px;font-weight:400;color:#333;font-family:'Liberation Sans',sans-serif;">Sales</div>
<div class="r" style="left:1379px;top:658px;width:577px;height:30px;background:#ebebeb;"></div>
<svg class="r" style="left:1662px;top:677px;" width="12" height="12" viewBox="0 0 12 12"><circle cx="6" cy="6" r="6" fill="#d0d0d0"/></svg>
<svg class="r" style="left:1387px;top:711px;" width="30" height="30" viewBox="0 0 30 30"><ellipse cx="14.8" cy="6.4" rx="14" ry="5.5" fill="#606060"/><path d="M0.9 7.6 L10.6 18.5 V25.2 a4.2 4.2 0 0 0 8.4 0 V18.5 L28.7 7.6 Z" fill="#606060"/><ellipse cx="15" cy="7.2" rx="10.2" ry="3.3" fill="#ebebeb"/></svg>
<div class="t" style="left:1434.45px;top:715px;font-size:26px;line-height:26px;font-weight:400;color:#222;font-family:'Liberation Sans',sans-serif;transform:scaleX(1.0765);-webkit-text-stroke:0.4px #222;">Filters</div>
<svg class="r" style="left:1693px;top:716px;" width="27" height="20" viewBox="0 0 27 20"><rect x="0" y="0" width="6" height="20" rx="1" fill="#555"/><rect x="10.5" y="0" width="6" height="20" rx="1" fill="#555"/><rect x="21" y="0" width="6" height="20" rx="1" fill="#555"/></svg>
<div class="t" style="left:1741.97px;top:715px;font-size:26px;line-height:26px;font-weight:400;color:#222;font-family:'Liberation Sans',sans-serif;transform:scaleX(1.0347);-webkit-text-stroke:0.4px #222;">Columns</div>
<div class="r" style="left:1380px;top:757px;width:272px;height:255px;background:#fff;box-shadow:0 0 0 1px #e2e2e2;"></div>
<div class="r" style="left:1686px;top:757px;width:270px;height:255px;background:#fff;box-shadow:0 0 0 1px #e2e2e2;"></div>
<svg class="r" style="left:1394px;top:771.5px;" width="7" height="17" viewBox="0 0 7 17"><circle cx="3.5" cy="3.5" r="3" fill="#9a9a9a"/><circle cx="3.5" cy="13.5" r="3" fill="#9a9a9a"/></svg>
<div class="t" style="left:1409.98px;top:770px;font-size:22.5px;line-height:22.5px;font-weight:400;color:#333;font-family:'Liberation Sans',sans-serif;transform:scaleX(1.0189);">Open</div>
<svg class="r" style="left:1623.5px;top:767.5px;" width="25" height="25" viewBox="0 0 25 25"><circle cx="12.5" cy="12.4" r="11.8" fill="#c4c4c4"/><circle cx="12.5" cy="12.4" r="11.3" fill="none" stroke="#a9a9a9" stroke-width="1"/><circle cx="14.6" cy="4.6" r="2.1" fill="#fff"/><path d="M8.3 10.9 L14.9 9.6 L12.1 19.6 C11.9 20.4 12.5 20.6 13.3 20.1 L15.4 18.8 C14.2 21.4 11.6 22.3 10 22.1 C8.9 21.9 8.6 21 8.9 19.9 L11.1 12.4 L8.6 12.6 Z" fill="#fff"/></svg>
<svg class="r" style="left:1700px;top:771.5px;" width="7" height="17" viewBox="0 0 7 17"><circle cx="3.5" cy="3.5" r="3" fill="#9a9a9a"/><circle cx="3.5" cy="13.5" r="3" fill="#9a9a9a"/></svg>
<div class="t" style="left:1716.80px;top:770px;font-size:22.5px;line-height:22.5px;font-weight:400;color:#333;font-family:'Liberation Sans',sans-serif;">Values</div>
<svg class="r" style="left:1389px;top:1045px;" width="24" height="28" viewBox="0 0 24 28"><rect x="0" y="0" width="24" height="6.5" fill="#555"/><rect x="0" y="10.5" width="24" height="6.5" fill="#555"/><rect x="0" y="21" width="24" height="6.5" fill="#555"/></svg>
<div class="t" style="left:1434.78px;top:1049px;font-size:26px;line-height:26px;font-weight:400;color:#222;font-family:'Liberation Sans',sans-serif;transform:scaleX(1.0097);-webkit-text-stroke:0.4px #222;">Rows</div>
<svg class="r" style="left:1693px;top:1045px;" width="26" height="30" viewBox="0 0 26 30"><path d="M1.5 0.8 H24 V7.5 H22.3 C21.8 5 21 4.3 18.5 4.3 H8.2 L15.2 13.6 L7.2 24.6 H19.5 C21.5 24.6 22.3 23.5 22.8 21 H24.5 V28.6 H1 L11.2 14.3 Z" fill="#6b6b6b"/></svg>
<div class="t" style="left:1740.60px;top:1049px;font-size:26px;line-height:26px;font-weight:400;color:#222;font-family:'Liberation Sans',sans-serif;transform:scaleX(1.0052);-webkit-text-stroke:0.4px #222;">Values</div>
<div class="r" style="left:1380px;top:1096px;width:272px;height:254px;background:#fff;box-shadow:0 0 0 1px #e2e2e2;"></div>
<div class="r" style="left:1684px;top:1096px;width:272px;height:254px;background:#fff;box-shadow:0 0 0 1px #e2e2e2;"></div>
<svg class="r" style="left:1394px;top:1109.5px;" width="7" height="17" viewBox="0 0 7 17"><circle cx="3.5" cy="3.5" r="3" fill="#9a9a9a"/><circle cx="3.5" cy="13.5" r="3" fill="#9a9a9a"/></svg>
<div class="t" style="left:1409.96px;top:1108px;font-size:22.5px;line-height:22.5px;font-weight:400;color:#333;font-family:'Liberation Sans',sans-serif;transform:scaleX(1.0385);">Store</div>
<svg class="r" style="left:1623.5px;top:1105.5px;" width="25" height="25" viewBox="0 0 25 25"><circle cx="12.5" cy="12.4" r="11.8" fill="#c4c4c4"/><circle cx="12.5" cy="12.4" r="11.3" fill="none" stroke="#a9a9a9" stroke-width="1"/><circle cx="14.6" cy="4.6" r="2.1" fill="#fff"/><path d="M8.3 10.9 L14.9 9.6 L12.1 19.6 C11.9 20.4 12.5 20.6 13.3 20.1 L15.4 18.8 C14.2 21.4 11.6 22.3 10 22.1 C8.9 21.9 8.6 21 8.9 19.9 L11.1 12.4 L8.6 12.6 Z" fill="#fff"/></svg>
<svg class="r" style="left:1394px;top:1153.5px;" width="7" height="17" viewBox="0 0 7 17"><circle cx="3.5" cy="3.5" r="3" fill="#9a9a9a"/><circle cx="3.5" cy="13.5" r="3" fill="#9a9a9a"/></svg>
<div class="t" style="left:1408.97px;top:1152px;font-size:22.5px;line-height:22.5px;font-weight:400;color:#333;font-family:'Liberation Sans',sans-serif;transform:scaleX(1.0168);">DayOfWeek</div>
<svg class="r" style="left:1623.5px;top:1149.5px;" width="25" height="25" viewBox="0 0 25 25"><circle cx="12.5" cy="12.4" r="11.8" fill="#c4c4c4"/><circle cx="12.5" cy="12.4" r="11.3" fill="none" stroke="#a9a9a9" stroke-width="1"/><circle cx="14.6" cy="4.6" r="2.1" fill="#fff"/><path d="M8.3 10.9 L14.9 9.6 L12.1 19.6 C11.9 20.4 12.5 20.6 13.3 20.1 L15.4 18.8 C14.2 21.4 11.6 22.3 10 22.1 C8.9 21.9 8.6 21 8.9 19.9 L11.1 12.4 L8.6 12.6 Z" fill="#fff"/></svg>
<svg class="r" style="left:1698px;top:1109.5px;" width="7" height="17" viewBox="0 0 7 17"><circle cx="3.5" cy="3.5" r="3" fill="#9a9a9a"/><circle cx="3.5" cy="13.5" r="3" fill="#9a9a9a"/></svg>
<div class="t" style="left:1714.80px;top:1108px;font-size:22.5px;line-height:22.5px;font-weight:400;color:#333;font-family:'Liberation Sans',sans-serif;transform:scaleX(1.0094);">Average of Sales</div>
<svg class="r" style="left:1927.5px;top:1105.5px;" width="25" height="25" viewBox="0 0 25 25"><circle cx="12.5" cy="12.4" r="11.8" fill="#c4c4c4"/><circle cx="12.5" cy="12.4" r="11.3" fill="none" stroke="#a9a9a9" stroke-width="1"/><circle cx="14.6" cy="4.6" r="2.1" fill="#fff"/><path d="M8.3 10.9 L14.9 9.6 L12.1 19.6 C11.9 20.4 12.5 20.6 13.3 20.1 L15.4 18.8 C14.2 21.4 11.6 22.3 10 22.1 C8.9 21.9 8.6 21 8.9 19.9 L11.1 12.4 L8.6 12.6 Z" fill="#fff"/></svg>
<svg class="r" style="left:1698px;top:1153.5px;" width="7" height="17" viewBox="0 0 7 17"><circle cx="3.5" cy="3.5" r="3" fill="#9a9a9a"/><circle cx="3.5" cy="13.5" r="3" fill="#9a9a9a"/></svg>
<div class="t" style="left:1714.80px;top:1152px;font-size:22.5px;line-height:22.5px;font-weight:400;color:#333;font-family:'Liberation Sans',sans-serif;transform:scaleX(1.0272);">Average of Custo...</div>
<svg class="r" style="left:1927.5px;top:1149.5px;" width="25" height="25" viewBox="0 0 25 25"><circle cx="12.5" cy="12.4" r="11.8" fill="#c4c4c4"/><circle cx="12.5" cy="12.4" r="11.3" fill="none" stroke="#a9a9a9" stroke-width="1"/><circle cx="14.6" cy="4.6" r="2.1" fill="#fff"/><path d="M8.3 10.9 L14.9 9.6 L12.1 19.6 C11.9 20.4 12.5 20.6 13.3 20.1 L15.4 18.8 C14.2 21.4 11.6 22.3 10 22.1 C8.9 21.9 8.6 21 8.9 19.9 L11.1 12.4 L8.6 12.6 Z" fill="#fff"/></svg>
<div class="t" style="left:1508.90px;top:1374px;font-size:26px;line-height:26px;font-weight:400;color:#b0b0b0;font-family:'Liberation Sans',sans-serif;transform:scaleX(1.0485);">Drag fields between areas</div>
<div class="r" style="left:0px;top:1378px;width:1367px;height:52px;background:#f0f0f0;"></div>
<div class="r" style="left:0px;top:1378px;width:1367px;height:2px;background:#cbcbcb;"></div>
<svg class="r" style="left:29px;top:1394px;" width="16" height="21" viewBox="0 0 16 21"><path d="M15 0 V21 L0 10.5 Z" fill="#bcbcbc"/></svg>
<svg class="r" style="left:75px;top:1394px;" width="16" height="21" viewBox="0 0 16 21"><path d="M1 0 V21 L16 10.5 Z" fill="#bcbcbc"/></svg>
<div class="r" style="left:121.5px;top:1379px;width:157px;height:43.5px;background:#fff;border-radius:0 0 6px 6px;box-shadow:0 1.5px 1px rgba(0,0,0,.22), 1px 0 0 #d8d8d8, -1px 0 0 #d8d8d8;"></div>
<div class="t" style="left:159.61px;top:1389px;font-size:24px;line-height:24px;font-weight:700;color:#3b7a4e;font-family:'Liberation Sans',sans-serif;transform:scaleX(0.9896);">Sheet1</div>
<div class="t" style="left:312.67px;top:1389px;font-size:24px;line-height:24px;font-weight:400;color:#5a5a5a;font-family:'Liberation Sans',sans-serif;transform:scaleX(1.0316);">raw_data</div>
<div class="r" style="left:448px;top:1380px;width:2px;height:41px;background:#d3d3d3;"></div>
<div class="t" style="left:484.37px;top:1389px;font-size:24px;line-height:24px;font-weight:400;color:#5a5a5a;font-family:'Liberation Sans',sans-serif;transform:scaleX(1.0343);">cleaned_data</div>
<div class="r" style="left:668px;top:1380px;width:2px;height:41px;background:#d3d3d3;"></div>
<svg class="r" style="left:698px;top:1393px;" width="21" height="20" viewBox="0 0 21 20"><path d="M10.5 0 V20 M0 10 H21" stroke="#3a3a3a" stroke-width="3.2"/></svg>
<div class="r" style="left:744px;top:1380px;width:2px;height:41px;background:#d3d3d3;"></div>
<div class="r" style="left:0px;top:1430px;width:1968px;height:46px;background:linear-gradient(#e9e9e9,#dcdcdc);"></div>
<div class="r" style="left:0px;top:1430px;width:1968px;height:2px;background:#c2c2c2;"></div>
<svg class="r" style="left:47px;top:1437px;" width="31" height="29" viewBox="0 0 31 29"><circle cx="5.5" cy="5.5" r="5" fill="#5e5e5e"/><path d="M5.5 5 H27 a3 3 0 0 1 3 3 M25 6 V24 a4 4 0 0 1 -4 4 H6 a4 4 0 0 1 -4 -4 V23 H14 M6 5 V23" fill="none" stroke="#5e5e5e" stroke-width="3.2"/></svg>
<div class="r" style="left:1330px;top:1432px;width:74px;height:44px;background:#a9a9a9;"></div>
<svg class="r" style="left:1353.8px;top:1440px;" width="26" height="26" viewBox="0 0 26 26"><rect x="0" y="0" width="26" height="25.8" rx="2.5" fill="#fff"/><rect x="2.3" y="2.1" width="5.8" height="5.7" fill="#a9a9a9"/><rect x="2.3" y="10.1" width="5.8" height="5.7" fill="#a9a9a9"/><rect x="2.3" y="18" width="5.8" height="5.7" fill="#a9a9a9"/><rect x="10.3" y="2.1" width="5.8" height="5.7" fill="#a9a9a9"/><rect x="10.3" y="10.1" width="5.8" height="5.7" fill="#a9a9a9"/><rect x="10.3" y="18" width="5.8" height="5.7" fill="#a9a9a9"/><rect x="18.3" y="2.1" width="5.8" height="5.7" fill="#a9a9a9"/><rect x="18.3" y="10.1" width="5.8" height="5.7" fill="#a9a9a9"/><rect x="18.3" y="18" width="5.8" height="5.7" fill="#a9a9a9"/></svg>
<svg class="r" style="left:1424px;top:1440px;" width="29" height="27" viewBox="0 0 29 27"><rect x="1" y="1" width="27" height="25" rx="1.5" fill="none" stroke="#666" stroke-width="2"/><rect x="7" y="6" width="15" height="15" fill="none" stroke="#666" stroke-width="1.8"/><path d="M10 10 H19 M10 13.5 H19 M10 17 H19" stroke="#666" stroke-width="1.6"/></svg>
<svg class="r" style="left:1495.5px;top:1440px;" width="29" height="27" viewBox="0 0 29 27"><rect x="1" y="1" width="27" height="25" rx="1.5" fill="none" stroke="#666" stroke-width="2"/><path d="M1 16 H20 V1 M10 1 V16" fill="none" stroke="#666" stroke-width="2"/></svg>
<div class="r" style="left:1562px;top:1452px;width:16.5px;height:3.5px;background:#5a5a5a;"></div>
<div class="r" style="left:1594px;top:1449.5px;width:196px;height:9px;background:#9e9e9e;border-radius:4.5px;"></div>
<div class="r" style="left:1670.5px;top:1442px;width:22px;height:22px;background:#fff;border-radius:50%;box-shadow:0 0.5px 2px rgba(0,0,0,.35);"></div>
<svg class="r" style="left:1805.5px;top:1445.5px;" width="17" height="17" viewBox="0 0 17 17"><path d="M8.5 0 V17 M0 8.5 H17" stroke="#5a5a5a" stroke-width="3.4"/></svg>
<div class="t" style="left:1861.56px;top:1442px;font-size:25px;line-height:25px;font-weight:400;color:#555;font-family:'Liberation Sans',sans-serif;transform:scaleX(1.0438);">90%</div>
<div class="r" style="left:1960px;top:1472px;width:8px;height:4px;background:#000;"></div>
<div class="r" style="left:0px;top:1472px;width:8px;height:4px;background:#000;"></div>
</body></html>
